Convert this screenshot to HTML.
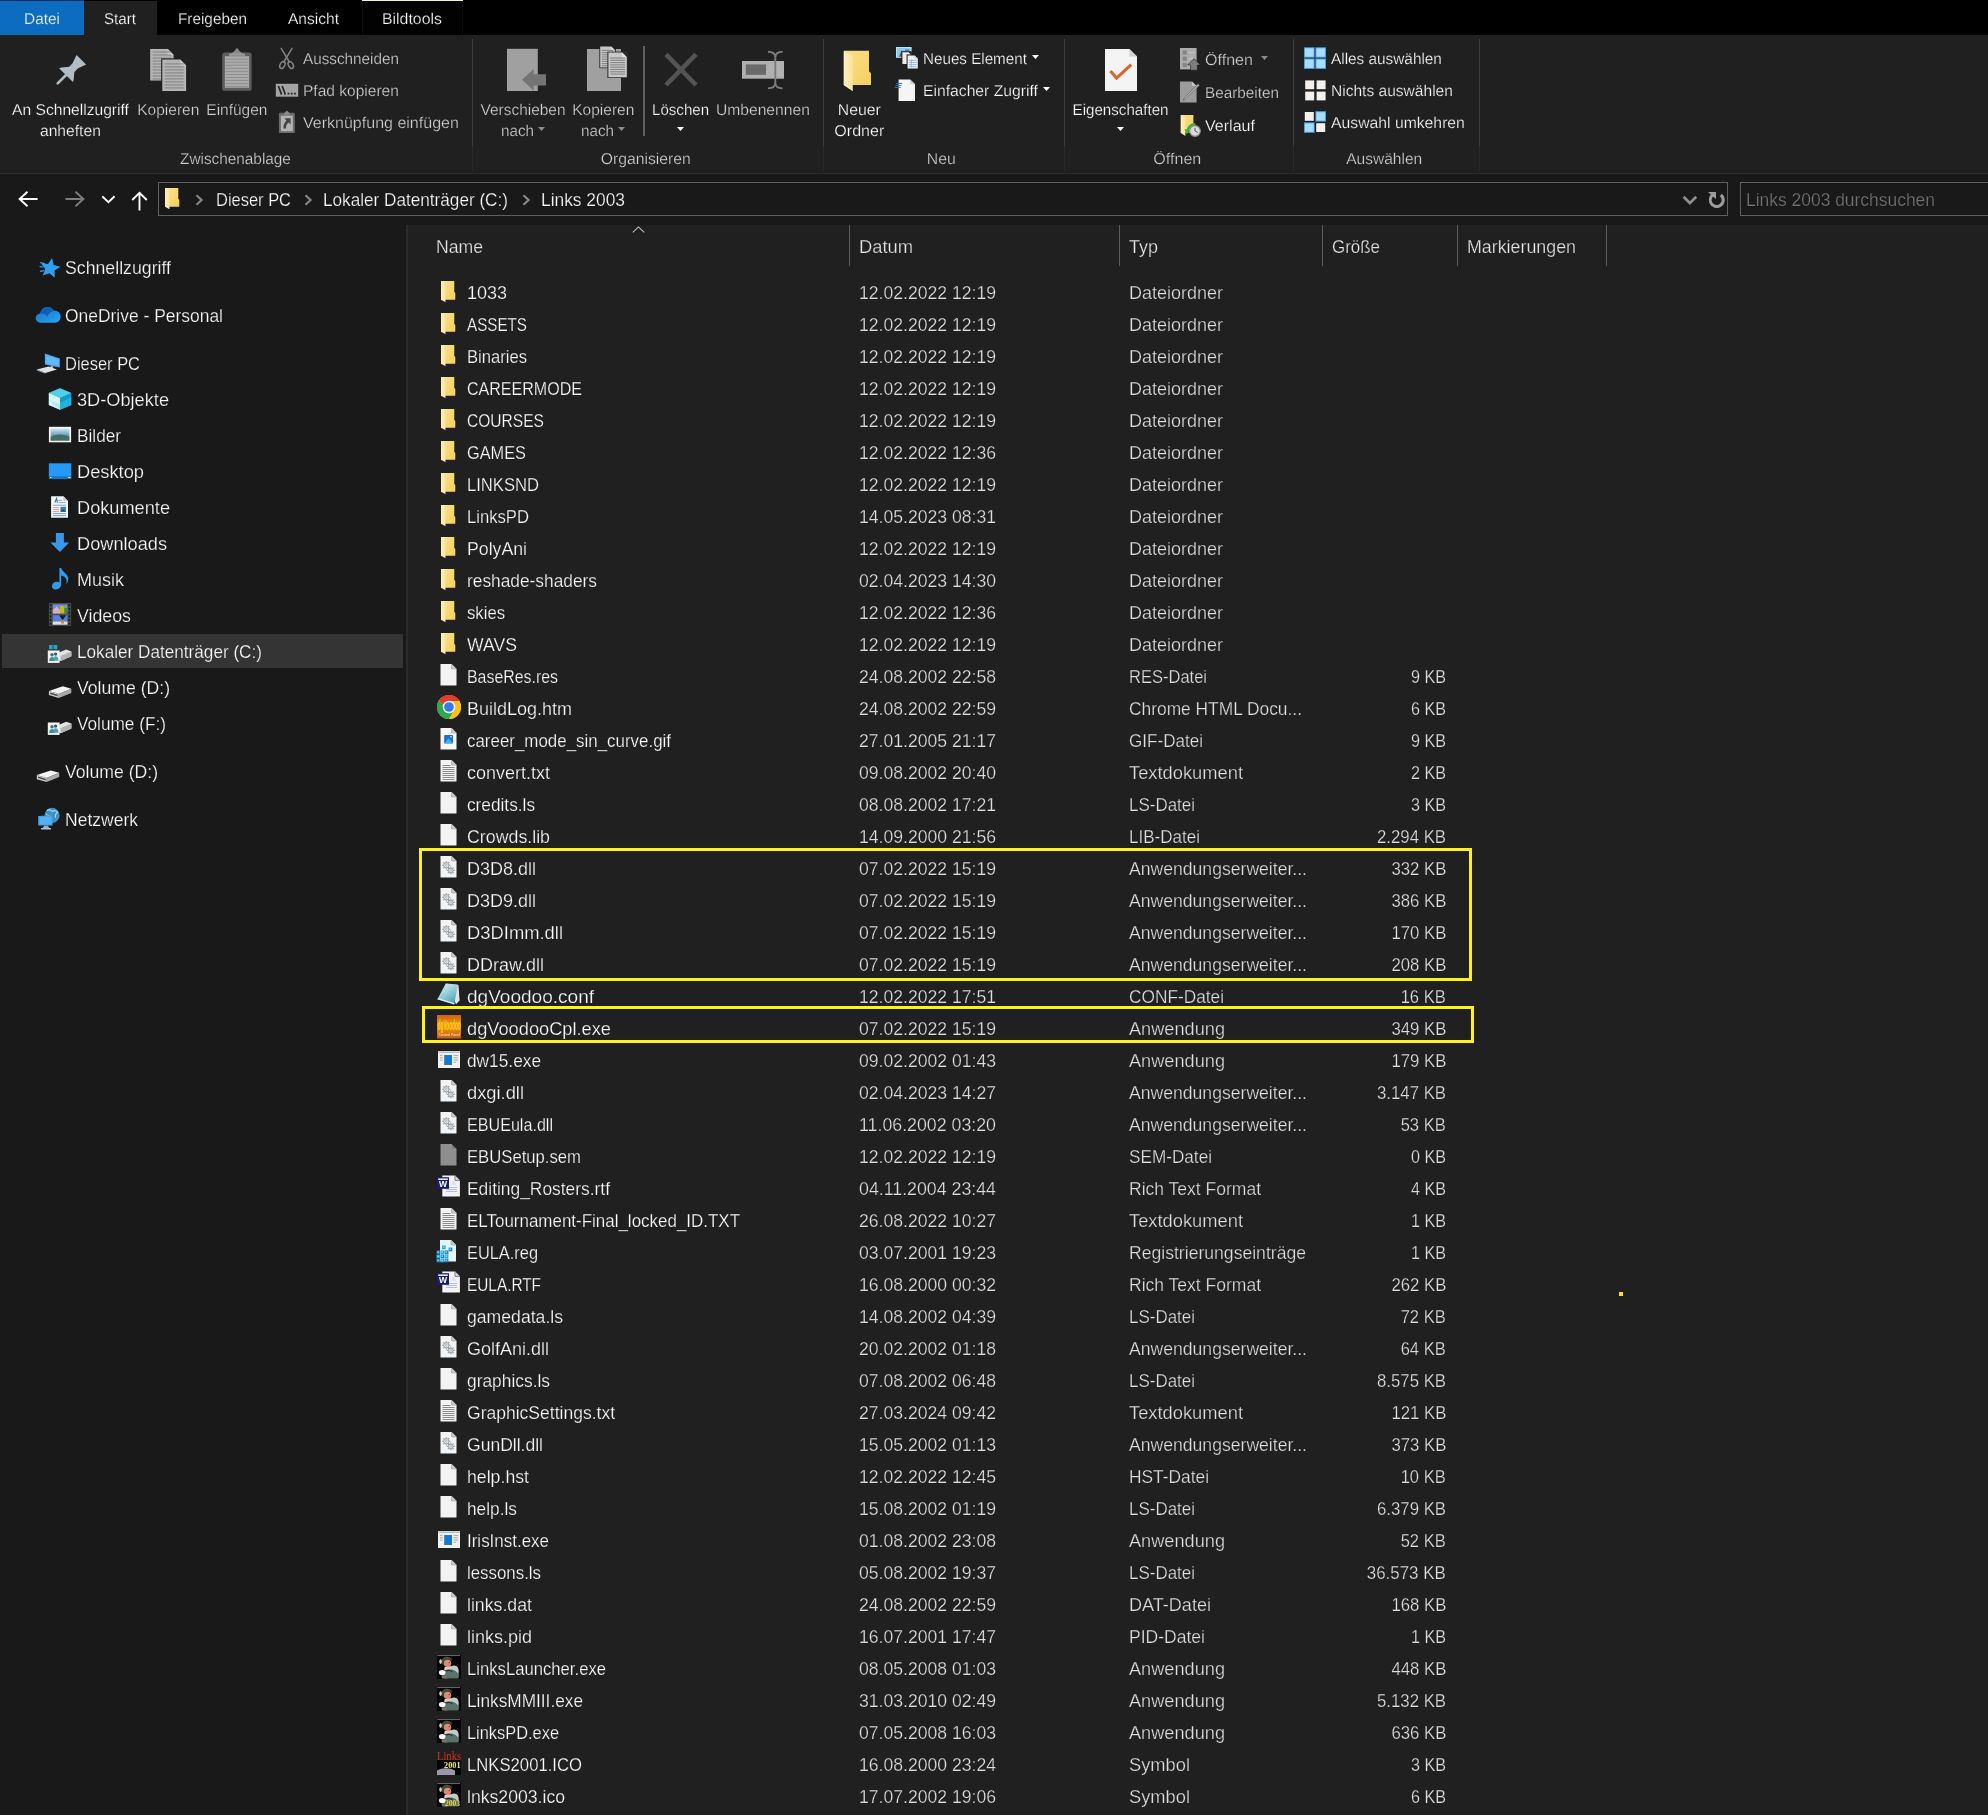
<!DOCTYPE html>
<html lang="de"><head><meta charset="utf-8"><title>Links 2003</title>
<style>
html,body{margin:0;padding:0}
body{width:1988px;height:1815px;background:#202020;position:relative;overflow:hidden;font-family:"Liberation Sans",sans-serif;}
.t{position:absolute;white-space:pre;line-height:20px;display:block}
.b{position:absolute;display:block}
#w{position:absolute;left:0;top:0;width:1988px;height:1815px;will-change:transform}
</style></head><body><div id="w">
<svg width="0" height="0" style="position:absolute"><defs>
<linearGradient id="gf" x1="0" y1="0" x2="1" y2="1"><stop offset="0" stop-color="#fbe08a"/><stop offset="1" stop-color="#f5cf5e"/></linearGradient>
<linearGradient id="gfl" x1="0" y1="0" x2="1" y2="0"><stop offset="0" stop-color="#fdf0c4"/><stop offset="1" stop-color="#fae29a"/></linearGradient>
<linearGradient id="gconf" x1="0" y1="0" x2="0.6" y2="1"><stop offset="0" stop-color="#e4f4f5"/><stop offset="0.45" stop-color="#a4d6de"/><stop offset="1" stop-color="#4fa5b8"/></linearGradient>
<linearGradient id="gdg" x1="0" y1="0" x2="0" y2="1"><stop offset="0" stop-color="#c9650c"/><stop offset="0.45" stop-color="#f09a18"/><stop offset="1" stop-color="#c85a0a"/></linearGradient>
<linearGradient id="gdrv" x1="0" y1="0" x2="0" y2="1"><stop offset="0" stop-color="#f4f4f4"/><stop offset="1" stop-color="#bdbdbd"/></linearGradient>
<linearGradient id="gcube" x1="0" y1="0" x2="1" y2="0"><stop offset="0" stop-color="#d6f3f6"/><stop offset="1" stop-color="#7fd6e4"/></linearGradient>
<linearGradient id="gpic" x1="0" y1="0" x2="0" y2="1"><stop offset="0" stop-color="#cfe6f2"/><stop offset="0.55" stop-color="#6f9fb5"/><stop offset="1" stop-color="#3f6f63"/></linearGradient>
<linearGradient id="gcloud" x1="0" y1="0" x2="1" y2="1"><stop offset="0" stop-color="#1372c9"/><stop offset="1" stop-color="#2aa4f4"/></linearGradient>
</defs></svg>
<div class="b" style="left:0px;top:0px;width:1988px;height:35px;background:#000;"></div>
<div class="b" style="left:0px;top:0px;width:84px;height:1px;background:#0a2c55;"></div>
<div class="b" style="left:0px;top:1px;width:84px;height:34px;background:#0c6cbf;"></div>
<div class="b" style="left:84px;top:1px;width:72.5px;height:35px;background:#202020;"></div>
<div class="b" style="left:362px;top:0px;width:101px;height:1.2px;background:#f2f2c2;"></div>
<div class="b" style="left:362px;top:1.2px;width:101px;height:33.8px;background:#020202;border-left:1px solid #0d0d0d;border-right:1px solid #0d0d0d;box-sizing:border-box"></div>
<div class="b" style="left:0px;top:169px;width:1988px;height:4px;background:#1d1d1d;"></div>
<div class="b" style="left:0px;top:173px;width:1988px;height:1px;background:#2c2c2c;"></div>
<div class="b" style="left:0px;top:174px;width:1988px;height:51px;background:#191919;"></div>
<div class="b" style="left:0px;top:225px;width:406px;height:1590px;background:#191919;"></div>
<div class="b" style="left:405.6px;top:225px;width:2.2px;height:1590px;background:#2a2a2a;"></div>
<span class="t" style="left:23.8px;top:10px;font-size:15.64px;color:#fff;transform:scaleX(0.9860);transform-origin:0 0;-webkit-text-stroke:0.25px #0c6cbf;text-rendering:geometricPrecision;">Datei</span>
<span class="t" style="left:103.5px;top:10px;font-size:15.64px;color:#fff;transform:scaleX(0.9689);transform-origin:0 0;-webkit-text-stroke:0.25px #202020;text-rendering:geometricPrecision;">Start</span>
<span class="t" style="left:177.5px;top:10px;font-size:15.64px;color:#fff;transform:scaleX(0.9798);transform-origin:0 0;-webkit-text-stroke:0.25px #000;text-rendering:geometricPrecision;">Freigeben</span>
<span class="t" style="left:287.5px;top:10px;font-size:15.64px;color:#fff;transform:scaleX(0.9944);transform-origin:0 0;-webkit-text-stroke:0.25px #000;text-rendering:geometricPrecision;">Ansicht</span>
<span class="t" style="left:381.5px;top:10px;font-size:15.64px;color:#fff;transform:scaleX(1.0150);transform-origin:0 0;-webkit-text-stroke:0.25px #020202;text-rendering:geometricPrecision;">Bildtools</span>
<div class="b" style="left:472px;top:39px;width:1px;height:107px;background:#3d3d3d;"></div>
<div class="b" style="left:472px;top:146px;width:1px;height:25px;background:#2a2a2a;"></div>
<div class="b" style="left:823px;top:39px;width:1px;height:107px;background:#3d3d3d;"></div>
<div class="b" style="left:823px;top:146px;width:1px;height:25px;background:#2a2a2a;"></div>
<div class="b" style="left:1064px;top:39px;width:1px;height:107px;background:#3d3d3d;"></div>
<div class="b" style="left:1064px;top:146px;width:1px;height:25px;background:#2a2a2a;"></div>
<div class="b" style="left:1293px;top:39px;width:1px;height:107px;background:#3d3d3d;"></div>
<div class="b" style="left:1293px;top:146px;width:1px;height:25px;background:#2a2a2a;"></div>
<div class="b" style="left:1479px;top:39px;width:1px;height:107px;background:#3d3d3d;"></div>
<div class="b" style="left:1479px;top:146px;width:1px;height:25px;background:#2a2a2a;"></div>
<div class="b" style="left:643.2px;top:46px;width:2px;height:90px;background:#606060;"></div>
<span class="t" style="left:12.46px;top:101px;font-size:15.64px;color:#fff;transform:scaleX(0.9993);transform-origin:50% 0;-webkit-text-stroke:0.25px #202020;text-rendering:geometricPrecision;">An Schnellzugriff</span>
<span class="t" style="left:40.06px;top:122px;font-size:15.64px;color:#fff;transform:scaleX(1.0020);transform-origin:50% 0;-webkit-text-stroke:0.25px #202020;text-rendering:geometricPrecision;">anheften</span>
<span class="t" style="left:136.70px;top:101px;font-size:15.64px;color:#d0d0d0;transform:scaleX(0.9903);transform-origin:50% 0;-webkit-text-stroke:0.25px #202020;text-rendering:geometricPrecision;">Kopieren</span>
<span class="t" style="left:205.63px;top:101px;font-size:15.64px;color:#d0d0d0;transform:scaleX(0.9880);transform-origin:50% 0;-webkit-text-stroke:0.25px #202020;text-rendering:geometricPrecision;">Einfügen</span>
<span class="t" style="left:302.5px;top:50px;font-size:15.64px;color:#d0d0d0;transform:scaleX(0.9771);transform-origin:0 0;-webkit-text-stroke:0.25px #202020;text-rendering:geometricPrecision;">Ausschneiden</span>
<span class="t" style="left:302.5px;top:82px;font-size:15.64px;color:#d0d0d0;transform:scaleX(0.9947);transform-origin:0 0;-webkit-text-stroke:0.25px #202020;text-rendering:geometricPrecision;">Pfad kopieren</span>
<span class="t" style="left:302.5px;top:114px;font-size:15.64px;color:#d0d0d0;transform:scaleX(1.0251);transform-origin:0 0;-webkit-text-stroke:0.25px #202020;text-rendering:geometricPrecision;">Verknüpfung einfügen</span>
<span class="t" style="left:178.99px;top:150px;font-size:15.64px;color:#d0d0d0;transform:scaleX(0.9821);transform-origin:50% 0;-webkit-text-stroke:0.25px #202020;text-rendering:geometricPrecision;">Zwischenablage</span>
<span class="t" style="left:479.96px;top:101px;font-size:15.64px;color:#d0d0d0;transform:scaleX(0.9874);transform-origin:50% 0;-webkit-text-stroke:0.25px #202020;text-rendering:geometricPrecision;">Verschieben</span>
<span class="t" style="left:500.8px;top:122px;font-size:15.64px;color:#d0d0d0;transform:scaleX(0.9730);transform-origin:0 0;-webkit-text-stroke:0.25px #202020;text-rendering:geometricPrecision;">nach</span>
<span class="t" style="left:571.50px;top:101px;font-size:15.64px;color:#d0d0d0;transform:scaleX(0.9903);transform-origin:50% 0;-webkit-text-stroke:0.25px #202020;text-rendering:geometricPrecision;">Kopieren</span>
<span class="t" style="left:580.8px;top:122px;font-size:15.64px;color:#d0d0d0;transform:scaleX(0.9730);transform-origin:0 0;-webkit-text-stroke:0.25px #202020;text-rendering:geometricPrecision;">nach</span>
<span class="t" style="left:650.93px;top:101px;font-size:15.64px;color:#fff;transform:scaleX(0.9640);transform-origin:50% 0;-webkit-text-stroke:0.25px #202020;text-rendering:geometricPrecision;">Löschen</span>
<span class="t" style="left:716.05px;top:101px;font-size:15.64px;color:#d0d0d0;transform:scaleX(1.0010);transform-origin:50% 0;-webkit-text-stroke:0.25px #202020;text-rendering:geometricPrecision;">Umbenennen</span>
<span class="t" style="left:601.23px;top:150px;font-size:15.64px;color:#d0d0d0;transform:scaleX(1.0051);transform-origin:50% 0;-webkit-text-stroke:0.25px #202020;text-rendering:geometricPrecision;">Organisieren</span>
<span class="t" style="left:838.20px;top:101px;font-size:15.64px;color:#fff;transform:scaleX(1.0094);transform-origin:50% 0;-webkit-text-stroke:0.25px #202020;text-rendering:geometricPrecision;">Neuer</span>
<span class="t" style="left:834.86px;top:122px;font-size:15.64px;color:#fff;transform:scaleX(1.0272);transform-origin:50% 0;-webkit-text-stroke:0.25px #202020;text-rendering:geometricPrecision;">Ordner</span>
<span class="t" style="left:922.8px;top:50px;font-size:15.64px;color:#fff;transform:scaleX(0.9726);transform-origin:0 0;-webkit-text-stroke:0.25px #202020;text-rendering:geometricPrecision;">Neues Element</span>
<span class="t" style="left:922.8px;top:82px;font-size:15.64px;color:#fff;transform:scaleX(1.0047);transform-origin:0 0;-webkit-text-stroke:0.25px #202020;text-rendering:geometricPrecision;">Einfacher Zugriff</span>
<span class="t" style="left:927.15px;top:150px;font-size:15.64px;color:#d0d0d0;transform:scaleX(1.0108);transform-origin:50% 0;-webkit-text-stroke:0.25px #202020;text-rendering:geometricPrecision;">Neu</span>
<span class="t" style="left:1071.44px;top:101px;font-size:15.64px;color:#fff;transform:scaleX(0.9685);transform-origin:50% 0;-webkit-text-stroke:0.25px #202020;text-rendering:geometricPrecision;">Eigenschaften</span>
<span class="t" style="left:1204.8px;top:51px;font-size:15.64px;color:#d0d0d0;transform:scaleX(1.0285);transform-origin:0 0;-webkit-text-stroke:0.25px #202020;text-rendering:geometricPrecision;">Öffnen</span>
<span class="t" style="left:1204.8px;top:84px;font-size:15.64px;color:#d0d0d0;transform:scaleX(0.9782);transform-origin:0 0;-webkit-text-stroke:0.25px #202020;text-rendering:geometricPrecision;">Bearbeiten</span>
<span class="t" style="left:1204.8px;top:117px;font-size:15.64px;color:#fff;transform:scaleX(1.0269);transform-origin:0 0;-webkit-text-stroke:0.25px #202020;text-rendering:geometricPrecision;">Verlauf</span>
<span class="t" style="left:1153.67px;top:150px;font-size:15.64px;color:#d0d0d0;transform:scaleX(1.0285);transform-origin:50% 0;-webkit-text-stroke:0.25px #202020;text-rendering:geometricPrecision;">Öffnen</span>
<span class="t" style="left:1330.6px;top:50px;font-size:15.64px;color:#fff;transform:scaleX(0.9821);transform-origin:0 0;-webkit-text-stroke:0.25px #202020;text-rendering:geometricPrecision;">Alles auswählen</span>
<span class="t" style="left:1330.6px;top:82px;font-size:15.64px;color:#fff;transform:scaleX(0.9953);transform-origin:0 0;-webkit-text-stroke:0.25px #202020;text-rendering:geometricPrecision;">Nichts auswählen</span>
<span class="t" style="left:1330.6px;top:114px;font-size:15.64px;color:#fff;transform:scaleX(1.0075);transform-origin:0 0;-webkit-text-stroke:0.25px #202020;text-rendering:geometricPrecision;">Auswahl umkehren</span>
<span class="t" style="left:1345.74px;top:150px;font-size:15.64px;color:#d0d0d0;transform:scaleX(0.9933);transform-origin:50% 0;-webkit-text-stroke:0.25px #202020;text-rendering:geometricPrecision;">Auswählen</span>
<svg class="b" style="left:538.0px;top:127px;" width="7" height="4" viewBox="0 0 7 4"><path d="M0 0H7L3.5 4z" fill="#8a8a8a"/></svg>
<svg class="b" style="left:618.0px;top:127px;" width="7" height="4" viewBox="0 0 7 4"><path d="M0 0H7L3.5 4z" fill="#8a8a8a"/></svg>
<svg class="b" style="left:677.1px;top:127px;" width="7" height="4" viewBox="0 0 7 4"><path d="M0 0H7L3.5 4z" fill="#fff"/></svg>
<svg class="b" style="left:1116.9px;top:127px;" width="7" height="4" viewBox="0 0 7 4"><path d="M0 0H7L3.5 4z" fill="#fff"/></svg>
<svg class="b" style="left:1032.2px;top:55px;" width="7" height="4" viewBox="0 0 7 4"><path d="M0 0H7L3.5 4z" fill="#fff"/></svg>
<svg class="b" style="left:1043.2px;top:87px;" width="7" height="4" viewBox="0 0 7 4"><path d="M0 0H7L3.5 4z" fill="#fff"/></svg>
<svg class="b" style="left:1260.7px;top:56px;" width="7" height="4" viewBox="0 0 7 4"><path d="M0 0H7L3.5 4z" fill="#8a8a8a"/></svg>
<svg class="b" style="left:0;top:0" width="1988" height="172" viewBox="0 0 1988 172"><g transform="translate(66,75.1) rotate(-45)" fill="#b2bcc4"><path d="M0 -9.8C3 -9 5.5 -5.2 8.2 -3.7L13 -3.7C15.5 -4.6 19 -6 21.7 -6.7L21.7 6.7C19 6 15.5 4.6 13 3.7L8.2 3.7C5.5 5.2 3 9 0 9.8z"/><rect x="-13" y="-1.3" width="14" height="2.6" rx="1.2"/></g><path d="M149.6 48.5H168.2L174.2 54.5V81.2H149.6z" fill="#2c2c2c"/><path d="M150.2 49H167.6L173.6 55V80.6H150.2z" fill="#b4b4b4"/><path d="M167.6 49V55H173.6z" fill="#d0d0d0"/><path d="M152.6 52.0H171.2" stroke="#868686" stroke-width="1.1"/><path d="M152.6 55.0H171.2" stroke="#868686" stroke-width="1.1"/><path d="M152.6 58.0H171.2" stroke="#868686" stroke-width="1.1"/><path d="M152.6 61.0H171.2" stroke="#868686" stroke-width="1.1"/><path d="M152.6 64.0H171.2" stroke="#868686" stroke-width="1.1"/><path d="M152.6 67.0H171.2" stroke="#868686" stroke-width="1.1"/><path d="M152.6 70.0H171.2" stroke="#868686" stroke-width="1.1"/><path d="M152.6 73.0H171.2" stroke="#868686" stroke-width="1.1"/><path d="M152.6 76.0H171.2" stroke="#868686" stroke-width="1.1"/><path d="M152.6 79.0H171.2" stroke="#868686" stroke-width="1.1"/><rect x="161.2" y="58.4" width="26" height="33.4" fill="#222"/><path d="M162.3 59.4H180.10000000000002L186.10000000000002 65.4V90.9H162.3z" fill="#b4b4b4"/><path d="M180.10000000000002 59.4V65.4H186.10000000000002z" fill="#d0d0d0"/><path d="M164.70000000000002 63.9H183.70000000000002" stroke="#868686" stroke-width="1.1"/><path d="M164.70000000000002 66.9H183.70000000000002" stroke="#868686" stroke-width="1.1"/><path d="M164.70000000000002 69.9H183.70000000000002" stroke="#868686" stroke-width="1.1"/><path d="M164.70000000000002 72.9H183.70000000000002" stroke="#868686" stroke-width="1.1"/><path d="M164.70000000000002 75.9H183.70000000000002" stroke="#868686" stroke-width="1.1"/><path d="M164.70000000000002 78.9H183.70000000000002" stroke="#868686" stroke-width="1.1"/><path d="M164.70000000000002 81.9H183.70000000000002" stroke="#868686" stroke-width="1.1"/><path d="M164.70000000000002 84.9H183.70000000000002" stroke="#868686" stroke-width="1.1"/><path d="M164.70000000000002 87.9H183.70000000000002" stroke="#868686" stroke-width="1.1"/><rect x="222.2" y="52.4" width="29.4" height="38.4" rx="2.6" fill="#5e5e5e"/><path d="M231 53.4C233 52.6 235.4 51 236 48.6H238C238.6 51 241 52.6 243 53.4V55H231z" fill="#8a8a8a"/><rect x="229" y="53.6" width="16" height="2.2" fill="#9a9a9a"/><rect x="224.9" y="56.2" width="24.2" height="31.6" fill="#ababab"/><path d="M225.6 59.2H248.4" stroke="#8e8e8e" stroke-width="1"/><path d="M225.6 62.2H248.4" stroke="#8e8e8e" stroke-width="1"/><path d="M225.6 65.3H248.4" stroke="#8e8e8e" stroke-width="1"/><path d="M225.6 68.3H248.4" stroke="#8e8e8e" stroke-width="1"/><path d="M225.6 71.4H248.4" stroke="#8e8e8e" stroke-width="1"/><path d="M225.6 74.5H248.4" stroke="#8e8e8e" stroke-width="1"/><path d="M225.6 77.5H248.4" stroke="#8e8e8e" stroke-width="1"/><path d="M225.6 80.5H248.4" stroke="#8e8e8e" stroke-width="1"/><path d="M225.6 83.6H248.4" stroke="#8e8e8e" stroke-width="1"/><path d="M225.6 86.7H248.4" stroke="#8e8e8e" stroke-width="1"/><g fill="none" stroke="#838383" stroke-width="1.5" stroke-linecap="round"><path d="M281.2 48.3L289.4 62"/><path d="M292 48.3L283.8 62"/><ellipse cx="282.4" cy="65" rx="2.3" ry="3.7" transform="rotate(28 282.4 65)"/><ellipse cx="290.8" cy="65" rx="2.3" ry="3.7" transform="rotate(-28 290.8 65)"/></g><rect x="275.8" y="83.8" width="22.4" height="12.9" fill="#a4a4a4"/><path d="M278.4 86L281.6 94.6M282.2 86L285.4 94.6" stroke="#262626" stroke-width="1.7"/><path d="M287.6 93.6H289.4M290.8 93.6H292.6M294 93.6H295.8" stroke="#262626" stroke-width="1.7"/><rect x="278.9" y="112.7" width="15.9" height="20.4" rx="1.2" fill="#6a6a6a"/><path d="M284 113.4L286.9 110.6L289.8 113.4V114.8H284z" fill="#8a8a8a"/><rect x="280.9" y="115.6" width="11.9" height="15.6" fill="#b2b2b2"/><path d="M284.4 118.2H290.6V124.4L288.6 122.4C286.6 124 285.6 126 286.2 128.4L283.6 128.6C283 125.4 284.2 122.6 286.4 120.4z" fill="#454545"/><rect x="507" y="48.8" width="30.8" height="42.2" fill="#a0a0a0"/><path d="M546 74.2V85.4H533.6V90.6L522 79.8L533.6 69V74.2z" fill="#747474"/><path d="M537.8 69V74.2H546" fill="none" stroke="#a0a0a0" stroke-width="0"/><rect x="587" y="49" width="34" height="42" fill="#a0a0a0"/><rect x="599.4" y="45.6" width="16.6" height="22.6" fill="#202020"/><path d="M600.2 46.4H611.2L615.2 50.4V67.4H600.2z" fill="#c4c4c4"/><path d="M611.2 46.4V50.4H615.2z" fill="#e0e0e0"/><path d="M601.8000000000001 50.4H613.6" stroke="#8a8a8a" stroke-width="1.1"/><path d="M601.8000000000001 52.6H613.6" stroke="#8a8a8a" stroke-width="1.1"/><path d="M601.8000000000001 54.8H613.6" stroke="#8a8a8a" stroke-width="1.1"/><path d="M601.8000000000001 57.0H613.6" stroke="#8a8a8a" stroke-width="1.1"/><path d="M601.8000000000001 59.2H613.6" stroke="#8a8a8a" stroke-width="1.1"/><path d="M601.8000000000001 61.4H613.6" stroke="#8a8a8a" stroke-width="1.1"/><path d="M601.8000000000001 63.6H613.6" stroke="#8a8a8a" stroke-width="1.1"/><path d="M601.8000000000001 65.8H613.6" stroke="#8a8a8a" stroke-width="1.1"/><rect x="607.4" y="51.6" width="20.4" height="26.4" fill="#2a2a2a"/><path d="M608.4 52.6H622.1999999999999L626.8 57.2V77.2H608.4z" fill="#c8c8c8"/><path d="M622.1999999999999 52.6V57.2H626.8z" fill="#e4e4e4"/><path d="M610.1999999999999 58.0H625.0" stroke="#858585" stroke-width="1.1"/><path d="M610.1999999999999 60.3H625.0" stroke="#858585" stroke-width="1.1"/><path d="M610.1999999999999 62.6H625.0" stroke="#858585" stroke-width="1.1"/><path d="M610.1999999999999 64.9H625.0" stroke="#858585" stroke-width="1.1"/><path d="M610.1999999999999 67.2H625.0" stroke="#858585" stroke-width="1.1"/><path d="M610.1999999999999 69.5H625.0" stroke="#858585" stroke-width="1.1"/><path d="M610.1999999999999 71.8H625.0" stroke="#858585" stroke-width="1.1"/><path d="M610.1999999999999 74.1H625.0" stroke="#858585" stroke-width="1.1"/><path d="M666 54.4L696 85M696 54.4L666 85" stroke="#545454" stroke-width="4.6"/><rect x="742" y="61" width="42" height="17.7" fill="#b0b0b0"/><rect x="745.8" y="64.4" width="20.2" height="10.4" fill="#6a6a6a"/><path d="M768 51.8C772.6 51.8 775.3 53.4 775.3 57.4V82.6C775.3 86.6 772.6 88.4 768 88.4M782.6 51.8C778 51.8 775.3 53.4 775.3 57.4M775.3 82.6C775.3 86.6 778 88.4 782.6 88.4" fill="none" stroke="#7c7c7c" stroke-width="1.9"/><path d="M843.8 50.8H869V71.2L871 73.2V85H843.8z" fill="url(#gf)"/><path d="M843.8 51.3L852.8 55.6V91.3L843.8 85.3z" fill="url(#gfl)"/><rect x="896" y="47" width="15.6" height="10.8" fill="#bfe3f4"/><rect x="897" y="48" width="13.6" height="8.8" fill="#8cc8ea"/><path d="M899 56.8L901.6 50.6L903 52.4L904.8 56.8z" fill="#44606a"/><rect x="905" y="49.6" width="4.4" height="1.2" fill="#3a6fa8"/><rect x="901.4" y="51.2" width="10.4" height="13.6" fill="#202020"/><path d="M902.4 52.2H908.6L910.8 54.4V64H902.4z" fill="#f1e9ec"/><rect x="906.6" y="54.4" width="12.2" height="15" fill="#202020"/><path d="M907.6 55.4H914.6L917.8 58.6V68.6H907.6z" fill="#eef1f6"/><path d="M914.6 55.4V58.6H917.8z" fill="#c3c7ce"/><path d="M908.8 60.4H916.6" stroke="#86a8d6" stroke-width="0.8"/><path d="M908.8 62.5H916.6" stroke="#86a8d6" stroke-width="0.8"/><path d="M908.8 64.6H916.6" stroke="#86a8d6" stroke-width="0.8"/><path d="M908.8 66.7H916.6" stroke="#86a8d6" stroke-width="0.8"/><path d="M911.4 59.6V67.6" stroke="#86a8d6" stroke-width="0.7"/><path d="M898.6 79.4H910.2L915 84.2V101H898.6z" fill="#f5f5f5"/><path d="M910.2 79.4V84.2H915z" fill="#cfcfcf"/><path d="M896.2 83.4H902.2M895.4 85.4H901.4M894.8 87.4H900.6" stroke="#2f74c0" stroke-width="1"/><path d="M1105 49H1129.4L1137 56.6V91H1105z" fill="#f4f4f4"/><path d="M1129.4 49V56.6H1137z" fill="#d2d2d2"/><path d="M1110.4 71L1116.6 78L1131.2 64.6" fill="none" stroke="#e0602a" stroke-width="3"/><rect x="1180" y="48" width="16.6" height="21.4" fill="#adadad"/><rect x="1182.6" y="50.4" width="4.2" height="4.2" fill="#858585"/><path d="M1189 52.5H1194.6" stroke="#c6c6c6" stroke-width="1"/><rect x="1182.6" y="56.6" width="4.2" height="4.2" fill="#858585"/><path d="M1189 58.7H1194.6" stroke="#c6c6c6" stroke-width="1"/><rect x="1182.6" y="62.8" width="4.2" height="4.2" fill="#858585"/><path d="M1189 64.9H1194.6" stroke="#c6c6c6" stroke-width="1"/><path d="M1194 58.6L1200.4 65H1197.4V70.2H1190.6V65H1187.6z" fill="#7e7e7e" stroke="#202020" stroke-width="0.6"/><path d="M1180 81.4H1192L1196.6 86V102.6H1180z" fill="#9c9c9c"/><path d="M1192 81.4V86H1196.6z" fill="#c4c4c4"/><path d="M1198 83.8L1199.4 85.2L1185.4 99.2L1183.2 100.2L1184.2 98z" fill="#b4b4b4" stroke="#6a6a6a" stroke-width="0.8"/><path d="M1180.8 115H1193.4V126L1194.6 126.8V132.6H1180.8z" fill="url(#gf)"/><path d="M1180.8 115.3L1185.4 117.4V136L1180.8 133z" fill="url(#gfl)"/><path d="M1195.4 124.2C1191.4 124.4 1188.4 127 1187.6 130.6" fill="none" stroke="#3fae3a" stroke-width="2.6"/><path d="M1184.6 129L1190.4 130.4L1186.6 134.4z" fill="#3fae3a"/><circle cx="1195" cy="131" r="5.3" fill="#dcdcdc" stroke="#8c8c8c" stroke-width="1.2"/><path d="M1195 127.8V131L1197.6 132.4" fill="none" stroke="#555" stroke-width="1"/><rect x="1304.0" y="47.3" width="10.6" height="10.4" fill="#4aa3ea"/><rect x="1305.0" y="48.3" width="8.6" height="8.4" fill="#abdcff"/><rect x="1315.4" y="47.3" width="10.6" height="10.4" fill="#4aa3ea"/><rect x="1316.4" y="48.3" width="8.6" height="8.4" fill="#abdcff"/><rect x="1304.0" y="58.5" width="10.6" height="10.4" fill="#4aa3ea"/><rect x="1305.0" y="59.5" width="8.6" height="8.4" fill="#abdcff"/><rect x="1315.4" y="58.5" width="10.6" height="10.4" fill="#4aa3ea"/><rect x="1316.4" y="59.5" width="8.6" height="8.4" fill="#abdcff"/><rect x="1305.2" y="80.39999999999999" width="9" height="8.8" fill="#f4f0ee"/><rect x="1316.6000000000001" y="80.39999999999999" width="9" height="8.8" fill="#f4f0ee"/><rect x="1305.2" y="91.6" width="9" height="8.8" fill="#f4f0ee"/><rect x="1316.6000000000001" y="91.6" width="9" height="8.8" fill="#f4f0ee"/><rect x="1304.8" y="112.0" width="9" height="8.8" fill="#f4f0ee"/><rect x="1315.4" y="111.2" width="10.6" height="10.4" fill="#4aa3ea"/><rect x="1316.4" y="112.2" width="8.6" height="8.4" fill="#abdcff"/><rect x="1304.0" y="122.4" width="10.6" height="10.4" fill="#4aa3ea"/><rect x="1305.0" y="123.4" width="8.6" height="8.4" fill="#abdcff"/><rect x="1316.2" y="123.2" width="9" height="8.8" fill="#f4f0ee"/></svg>
<div class="b" style="left:158px;top:182px;width:1570px;height:34px;background:#191919;border:1px solid #5f5f5f;box-sizing:border-box"></div>
<div class="b" style="left:1740px;top:182px;width:260px;height:34px;background:#191919;border:1px solid #5f5f5f;box-sizing:border-box"></div>
<svg class="b" style="left:18.2px;top:191px;" width="20" height="16" viewBox="0 0 20 16"><path d="M9.5 0.8L1.6 8L9.5 15.2M1.8 8H19.6" fill="none" stroke="#fff" stroke-width="1.9"/></svg>
<svg class="b" style="left:64.5px;top:191px;" width="20" height="16" viewBox="0 0 20 16"><path d="M9.5 0.8L1.6 8L9.5 15.2M1.8 8H19.6" fill="none" stroke="#7c7c7c" stroke-width="1.9" transform="translate(20,0) scale(-1,1)"/></svg>
<svg class="b" style="left:101px;top:194.5px;" width="15" height="9" viewBox="0 0 15 9"><path d="M1.2 1.2L7.4 7.2L13.6 1.2" fill="none" stroke="#fff" stroke-width="1.9"/></svg>
<svg class="b" style="left:130.5px;top:190.5px;" width="17" height="20" viewBox="0 0 17 20"><path d="M1.2 9L8.5 1.8L15.8 9M8.5 2V19.6" fill="none" stroke="#fff" stroke-width="1.9"/></svg>
<svg class="b" style="left:164.7px;top:188px;" width="15" height="21.5" viewBox="0 0 15 21.5"><path d="M4 0H13.3V11.1L14.3 11.7V18.7H4z" fill="url(#gf)"/><path d="M0 0H4.5V21.3L0 18.8z" fill="url(#gfl)"/></svg>
<svg class="b" style="left:195.3px;top:193.5px;" width="9" height="12" viewBox="0 0 9 12"><path d="M1.5 1.2L6.6 6L1.5 10.8" fill="none" stroke="#858585" stroke-width="2.2"/></svg>
<svg class="b" style="left:304px;top:193.5px;" width="9" height="12" viewBox="0 0 9 12"><path d="M1.5 1.2L6.6 6L1.5 10.8" fill="none" stroke="#858585" stroke-width="2.2"/></svg>
<svg class="b" style="left:521.5px;top:193.5px;" width="9" height="12" viewBox="0 0 9 12"><path d="M1.5 1.2L6.6 6L1.5 10.8" fill="none" stroke="#858585" stroke-width="2.2"/></svg>
<span class="t" style="left:216.0px;top:190px;font-size:17.5px;color:#fff;transform:scaleX(0.9405);transform-origin:0 0;-webkit-text-stroke:0.25px #191919;">Dieser PC</span>
<span class="t" style="left:323.2px;top:190px;font-size:17.5px;color:#fff;transform:scaleX(0.9804);transform-origin:0 0;-webkit-text-stroke:0.25px #191919;">Lokaler Datenträger (C:)</span>
<span class="t" style="left:541.0px;top:190px;font-size:17.5px;color:#fff;transform:scaleX(0.9924);transform-origin:0 0;-webkit-text-stroke:0.25px #191919;">Links 2003</span>
<svg class="b" style="left:1682px;top:195px;" width="16" height="11" viewBox="0 0 16 11"><path d="M1.6 1.8L7.9 8.2L14.2 1.8" fill="none" stroke="#8f8f8f" stroke-width="2.7"/></svg>
<svg class="b" style="left:1706px;top:190px;" width="20" height="20" viewBox="0 0 20 20"><path d="M9.8 3.6A6.5 6.5 0 1 0 14.8 5" fill="none" stroke="#9c9c9c" stroke-width="3"/><path d="M2 2H10V9z" fill="#9c9c9c"/></svg>
<span class="t" style="left:1745.5px;top:190px;font-size:17.5px;color:#747474;transform:scaleX(0.9962);transform-origin:0 0;-webkit-text-stroke:0.25px #191919;">Links 2003 durchsuchen</span>
<div class="b" style="left:2px;top:634px;width:401px;height:33.5px;background:#343434;"></div>
<svg class="b" style="left:0;top:225px" width="100" height="620" viewBox="0 225 100 620"><polygon points="52.01,258.06 53.72,264.90 60.50,266.85 54.53,270.60 54.76,277.65 49.35,273.13 42.72,275.52 45.35,268.98 41.02,263.42 48.05,263.90" fill="#2f9ff2"/><path d="M40.2 262.6L45 263.6M39.6 266.6L43.6 267M40 271.4L44.2 270.6" stroke="#2f9ff2" stroke-width="1.2"/><path d="M41.2 322.8C37.6 322.8 35.6 320.6 35.8 317.8C36 315.4 37.8 313.8 40.2 313.6C40.8 309.8 43.8 307 47.6 307C50.6 307 52.8 308.4 54 310.8C57.6 310.4 60.6 312.8 60.6 316.6C60.6 320.2 58.2 322.8 54.8 322.8z" fill="url(#gcloud)"/><path d="M40.2 313.6C40.8 309.8 43.8 307 47.6 307C50.6 307 52.8 308.4 54 310.8C51 311.4 48.6 313.4 47.4 316.4C45.4 314.4 42.6 313.4 40.2 313.6z" fill="#0f5fb4"/><path d="M44.9 353.4L59.8 358.4V367.4L44.9 364.6z" fill="#4aa9f2"/><path d="M46.2 355.2L58.6 359.4V365.8L46.2 363.4z" fill="#63b8f8"/><path d="M51 366L53.6 366.6L52.4 368.4L49.6 367.8z" fill="#b8c4cc"/><path d="M36.8 369.6L48.6 366.6L57 369.4L45.4 373z" fill="#dfe3e6"/><path d="M36.8 369.6L45.4 373V373.8L36.8 370.4z" fill="#9aa4aa"/><path d="M60 388.2L71.2 393V405L60 409.8L48.8 405V393z" fill="#17a9d4"/><path d="M60 388.2L71.2 393L60 398L48.8 393z" fill="#52cfe8"/><path d="M48.8 393L60 398V409.8L48.8 405z" fill="#d9f3f6"/><path d="M48.8 400L60 409.8V404z" fill="#a5e4ee" opacity=".7"/><path d="M60 398L71.2 393V405L60 409.8z" fill="#0f9ccc"/><path d="M60 403L71.2 397V405L60 409.8z" fill="#2bb8dc" opacity=".8"/><rect x="48.9" y="426.8" width="22.2" height="15.5" fill="#f2f4f5"/><rect x="50.7" y="428.6" width="18.6" height="11.9" fill="url(#gpic)"/><path d="M50.7 437C55 434 60 433.4 69.3 436.4V440.5H50.7z" fill="#456f66"/><rect x="48.9" y="463.3" width="22.4" height="15.4" fill="#2499f5"/><rect x="48.9" y="476.3" width="22.4" height="2.4" fill="#0f78d0"/><rect x="50" y="476.9" width="1.4" height="1.2" fill="#fff"/><rect x="68.2" y="476.9" width="2.2" height="1.2" fill="#fff"/><path d="M51.1 496.3H63.4L68 500.9V517.8H51.1z" fill="#f4f6f8"/><path d="M63.4 496.3V500.9H68z" fill="#c5ccd2"/><path d="M54.8 502.6L56.6 498.6L57.4 502.6" fill="none" stroke="#2f6fc0" stroke-width="1.1"/><path d="M58.6 500.4H62M58.6 502.6H65.6" stroke="#7aa6d8" stroke-width="0.9"/><path d="M53 505.2H66M53 513.6H66M53 515.6H66" stroke="#6f9ad0" stroke-width="0.9"/><path d="M53 507.6H59M53 509.6H59M53 511.6H59" stroke="#d08a80" stroke-width="0.8"/><rect x="60.4" y="506.8" width="5.6" height="5" fill="#3f7fb0"/><path d="M60.4 511.8L63 509L66 511.8z" fill="#2a4f6a"/><path d="M55.9 533H63.9V542.6H69.2L59.9 552L50.4 542.6H55.9z" fill="#3a97ea"/><ellipse cx="56.4" cy="585.6" rx="4.6" ry="3.7" transform="rotate(-20 56.4 585.6)" fill="#2f9bea"/><path d="M59.4 568H61.2C62 571 65 572.6 67.2 575.4C69 577.8 68.6 581.6 66.2 584.2C67.2 581.2 66.6 578.4 64.4 576.8C63.2 576 62 575.6 61.2 575.4V585.8H59.4z" fill="#2f9bea"/><rect x="48.9" y="603" width="22.2" height="22.8" fill="#4b4f4b"/><rect x="49.8" y="604.2" width="1.8" height="2" fill="#1c1c1c"/><rect x="68.4" y="604.2" width="1.8" height="2" fill="#1c1c1c"/><rect x="49.8" y="607.9" width="1.8" height="2" fill="#1c1c1c"/><rect x="68.4" y="607.9" width="1.8" height="2" fill="#1c1c1c"/><rect x="49.8" y="611.6" width="1.8" height="2" fill="#1c1c1c"/><rect x="68.4" y="611.6" width="1.8" height="2" fill="#1c1c1c"/><rect x="49.8" y="615.3" width="1.8" height="2" fill="#1c1c1c"/><rect x="68.4" y="615.3" width="1.8" height="2" fill="#1c1c1c"/><rect x="49.8" y="619.0" width="1.8" height="2" fill="#1c1c1c"/><rect x="68.4" y="619.0" width="1.8" height="2" fill="#1c1c1c"/><rect x="49.8" y="622.7" width="1.8" height="2" fill="#1c1c1c"/><rect x="68.4" y="622.7" width="1.8" height="2" fill="#1c1c1c"/><rect x="52.8" y="604.4" width="14.6" height="9" fill="#6f8fd8"/><path d="M52.8 610L57 606.4L60 610.6V613.4H52.8z" fill="#d8b0c0"/><rect x="60" y="606" width="4.4" height="7.4" fill="#c8b818"/><rect x="64.4" y="608" width="3" height="5.4" fill="#3a8a30"/><rect x="52.8" y="615.2" width="14.6" height="9.4" fill="#5a7fe0"/><path d="M59 615.2L62.6 620L66.2 615.2z" fill="#1c1c1c"/><path d="M52.8 621.6H67.4V624.6H52.8z" fill="#e8e0d8"/><rect x="61" y="620.6" width="3" height="3" fill="#d89018"/><g transform="translate(57.2,649.6)"><path d="M0 3.6L9 0L14.2 1.8V6.6L3.4 11.4L0 10z" fill="#e4e4e4"/><path d="M3.4 6.2L14.2 1.8V6.6L3.4 11.4z" fill="#b4b4b4"/></g><g transform="translate(47.8,650.5)"><rect width="11.8" height="12.4" fill="#f1f3f2"/><circle cx="4.2" cy="4.2" r="1.7" fill="#3f6f7a"/><path d="M1.4 10.6C1.4 7.6 2.6 6.4 4.2 6.4S7 7.6 7 10.6z" fill="#3f8f9a"/><circle cx="7.8" cy="3.6" r="1.7" fill="#2f5f6a"/><path d="M5.6 10.2C5.6 7 6.4 5.8 7.9 5.8S10.6 7 10.6 10.2z" fill="#4fa0aa"/></g><rect x="49" y="645" width="3.7" height="4.2" fill="#1fa6c6"/><rect x="53.5" y="645" width="3.8" height="4.2" fill="#1fa6c6"/><g transform="translate(48.9,686.3)"><path d="M0 4.6L14 0L22.4 2.4L9.9 7.6z" fill="#f3f3f3"/><path d="M0 4.6L9.9 7.6V11.6L0 8.8z" fill="#cfcfcf"/><path d="M9.9 7.6L22.4 2.4V6.6L9.9 11.6z" fill="#a9a9a9"/><path d="M1.2 6.1L8.8 8.4V10L1.2 7.7z" fill="#4a4a4a"/></g><g transform="translate(57.2,721.8)"><path d="M0 3.6L9 0L14.2 1.8V6.6L3.4 11.4L0 10z" fill="#e4e4e4"/><path d="M3.4 6.2L14.2 1.8V6.6L3.4 11.4z" fill="#b4b4b4"/></g><g transform="translate(47.8,722.5)"><rect width="11.8" height="12.4" fill="#f1f3f2"/><circle cx="4.2" cy="4.2" r="1.7" fill="#3f6f7a"/><path d="M1.4 10.6C1.4 7.6 2.6 6.4 4.2 6.4S7 7.6 7 10.6z" fill="#3f8f9a"/><circle cx="7.8" cy="3.6" r="1.7" fill="#2f5f6a"/><path d="M5.6 10.2C5.6 7 6.4 5.8 7.9 5.8S10.6 7 10.6 10.2z" fill="#4fa0aa"/></g><g transform="translate(36.8,770.4)"><path d="M0 4.6L14 0L22.4 2.4L9.9 7.6z" fill="#f3f3f3"/><path d="M0 4.6L9.9 7.6V11.6L0 8.8z" fill="#cfcfcf"/><path d="M9.9 7.6L22.4 2.4V6.6L9.9 11.6z" fill="#a9a9a9"/><path d="M1.2 6.1L8.8 8.4V10L1.2 7.7z" fill="#4a4a4a"/></g><circle cx="52" cy="815.4" r="7.6" fill="#3f8fc0"/><path d="M47 810.6C49 809.4 51 810 52.4 811.4C54 810 56.4 810.6 57.6 812.6C56 813.6 55 815.6 55.6 817.6" fill="none" stroke="#a8d8f0" stroke-width="1.2"/><path d="M46 814C48 816 50 815 51 817" fill="none" stroke="#a8d8f0" stroke-width="1"/><path d="M38.2 816L52.6 815.2V825.4L38.2 825.6z" fill="#3d9fea"/><path d="M39.4 817L51.4 816.4V824.4L39.4 824.6z" fill="#55b0f4"/><path d="M44.4 825.6H47.6L49.6 828.2H42.4z" fill="#8ab0c8"/><rect x="41" y="828.2" width="10" height="1.2" fill="#dfe3e6"/></svg>
<span class="t" style="left:65.0px;top:258px;font-size:17.5px;color:#fff;transform:scaleX(1.0121);transform-origin:0 0;-webkit-text-stroke:0.25px #191919;">Schnellzugriff</span>
<span class="t" style="left:65.0px;top:306px;font-size:17.5px;color:#fff;transform:scaleX(0.9966);transform-origin:0 0;-webkit-text-stroke:0.25px #191919;">OneDrive - Personal</span>
<span class="t" style="left:65.3px;top:354px;font-size:17.5px;color:#fff;transform:scaleX(0.9405);transform-origin:0 0;-webkit-text-stroke:0.25px #191919;">Dieser PC</span>
<span class="t" style="left:77.0px;top:390px;font-size:17.5px;color:#fff;transform:scaleX(1.0395);transform-origin:0 0;-webkit-text-stroke:0.25px #191919;">3D-Objekte</span>
<span class="t" style="left:77.0px;top:426px;font-size:17.5px;color:#fff;transform:scaleX(0.9834);transform-origin:0 0;-webkit-text-stroke:0.25px #191919;">Bilder</span>
<span class="t" style="left:77.0px;top:462px;font-size:17.5px;color:#fff;transform:scaleX(1.0436);transform-origin:0 0;-webkit-text-stroke:0.25px #191919;">Desktop</span>
<span class="t" style="left:77.0px;top:498px;font-size:17.5px;color:#fff;transform:scaleX(1.0392);transform-origin:0 0;-webkit-text-stroke:0.25px #191919;">Dokumente</span>
<span class="t" style="left:77.0px;top:534px;font-size:17.5px;color:#fff;transform:scaleX(1.0395);transform-origin:0 0;-webkit-text-stroke:0.25px #191919;">Downloads</span>
<span class="t" style="left:77.0px;top:570px;font-size:17.5px;color:#fff;transform:scaleX(1.0285);transform-origin:0 0;-webkit-text-stroke:0.25px #191919;">Musik</span>
<span class="t" style="left:77.0px;top:606px;font-size:17.5px;color:#fff;transform:scaleX(1.0152);transform-origin:0 0;-webkit-text-stroke:0.25px #191919;">Videos</span>
<span class="t" style="left:77.0px;top:642px;font-size:17.5px;color:#fff;transform:scaleX(0.9804);transform-origin:0 0;-webkit-text-stroke:0.25px #343434;">Lokaler Datenträger (C:)</span>
<span class="t" style="left:77.0px;top:678px;font-size:17.5px;color:#fff;transform:scaleX(1.0066);transform-origin:0 0;-webkit-text-stroke:0.25px #191919;">Volume (D:)</span>
<span class="t" style="left:77.0px;top:714px;font-size:17.5px;color:#fff;transform:scaleX(0.9841);transform-origin:0 0;-webkit-text-stroke:0.25px #191919;">Volume (F:)</span>
<span class="t" style="left:65.0px;top:762px;font-size:17.5px;color:#fff;transform:scaleX(1.0066);transform-origin:0 0;-webkit-text-stroke:0.25px #191919;">Volume (D:)</span>
<span class="t" style="left:65.0px;top:810px;font-size:17.5px;color:#fff;transform:scaleX(1.0009);transform-origin:0 0;-webkit-text-stroke:0.25px #191919;">Netzwerk</span>
<div class="b" style="left:849px;top:225px;width:1px;height:41px;background:#5c5c5c;"></div>
<div class="b" style="left:1119px;top:225px;width:1px;height:41px;background:#5c5c5c;"></div>
<div class="b" style="left:1322px;top:225px;width:1px;height:41px;background:#5c5c5c;"></div>
<div class="b" style="left:1457px;top:225px;width:1px;height:41px;background:#5c5c5c;"></div>
<div class="b" style="left:1606px;top:225px;width:1px;height:41px;background:#5c5c5c;"></div>
<svg class="b" style="left:632px;top:225.5px;" width="13" height="7" viewBox="0 0 13 7"><path d="M0.8 6.4L6.5 0.9L12.2 6.4" fill="none" stroke="#bdbdbd" stroke-width="1.1"/></svg>
<span class="t" style="left:435.8px;top:237px;font-size:17.5px;color:#e4e4e4;transform:scaleX(1.0068);transform-origin:0 0;-webkit-text-stroke:0.25px #202020;">Name</span>
<span class="t" style="left:858.6px;top:237px;font-size:17.5px;color:#e4e4e4;transform:scaleX(1.0477);transform-origin:0 0;-webkit-text-stroke:0.25px #202020;">Datum</span>
<span class="t" style="left:1128.6px;top:237px;font-size:17.5px;color:#e4e4e4;transform:scaleX(1.0281);transform-origin:0 0;-webkit-text-stroke:0.25px #202020;">Typ</span>
<span class="t" style="left:1331.6px;top:237px;font-size:17.5px;color:#e4e4e4;transform:scaleX(0.9678);transform-origin:0 0;-webkit-text-stroke:0.25px #202020;">Größe</span>
<span class="t" style="left:1466.8px;top:237px;font-size:17.5px;color:#e4e4e4;transform:scaleX(1.0187);transform-origin:0 0;-webkit-text-stroke:0.25px #202020;">Markierungen</span>
<svg class="b" style="left:440.6px;top:280.6px;" width="15" height="22" viewBox="0 0 15 22"><path d="M4 0H13.3V11.1L14.3 11.7V18.7H4z" fill="url(#gf)"/><path d="M0 0H4.5V21.3L0 18.8z" fill="url(#gfl)"/></svg>
<span class="t" style="left:467.2px;top:283px;font-size:17.5px;color:#fff;transform:scaleX(1.0275);transform-origin:0 0;-webkit-text-stroke:0.25px #202020;">1033</span>
<span class="t" style="left:859.2px;top:283px;font-size:17.5px;color:#dedede;transform:scaleX(1.0056);transform-origin:0 0;-webkit-text-stroke:0.25px #202020;">12.02.2022 12:19</span>
<span class="t" style="left:1128.8px;top:283px;font-size:17.5px;color:#dedede;transform:scaleX(1.0280);transform-origin:0 0;-webkit-text-stroke:0.25px #202020;">Dateiordner</span>
<svg class="b" style="left:440.6px;top:312.6px;" width="15" height="22" viewBox="0 0 15 22"><path d="M4 0H13.3V11.1L14.3 11.7V18.7H4z" fill="url(#gf)"/><path d="M0 0H4.5V21.3L0 18.8z" fill="url(#gfl)"/></svg>
<span class="t" style="left:467.2px;top:315px;font-size:17.5px;color:#fff;transform:scaleX(0.8689);transform-origin:0 0;-webkit-text-stroke:0.25px #202020;">ASSETS</span>
<span class="t" style="left:859.2px;top:315px;font-size:17.5px;color:#dedede;transform:scaleX(1.0056);transform-origin:0 0;-webkit-text-stroke:0.25px #202020;">12.02.2022 12:19</span>
<span class="t" style="left:1128.8px;top:315px;font-size:17.5px;color:#dedede;transform:scaleX(1.0280);transform-origin:0 0;-webkit-text-stroke:0.25px #202020;">Dateiordner</span>
<svg class="b" style="left:440.6px;top:344.6px;" width="15" height="22" viewBox="0 0 15 22"><path d="M4 0H13.3V11.1L14.3 11.7V18.7H4z" fill="url(#gf)"/><path d="M0 0H4.5V21.3L0 18.8z" fill="url(#gfl)"/></svg>
<span class="t" style="left:467.2px;top:347px;font-size:17.5px;color:#fff;transform:scaleX(0.9490);transform-origin:0 0;-webkit-text-stroke:0.25px #202020;">Binaries</span>
<span class="t" style="left:859.2px;top:347px;font-size:17.5px;color:#dedede;transform:scaleX(1.0056);transform-origin:0 0;-webkit-text-stroke:0.25px #202020;">12.02.2022 12:19</span>
<span class="t" style="left:1128.8px;top:347px;font-size:17.5px;color:#dedede;transform:scaleX(1.0280);transform-origin:0 0;-webkit-text-stroke:0.25px #202020;">Dateiordner</span>
<svg class="b" style="left:440.6px;top:376.6px;" width="15" height="22" viewBox="0 0 15 22"><path d="M4 0H13.3V11.1L14.3 11.7V18.7H4z" fill="url(#gf)"/><path d="M0 0H4.5V21.3L0 18.8z" fill="url(#gfl)"/></svg>
<span class="t" style="left:467.2px;top:379px;font-size:17.5px;color:#fff;transform:scaleX(0.9168);transform-origin:0 0;-webkit-text-stroke:0.25px #202020;">CAREERMODE</span>
<span class="t" style="left:859.2px;top:379px;font-size:17.5px;color:#dedede;transform:scaleX(1.0056);transform-origin:0 0;-webkit-text-stroke:0.25px #202020;">12.02.2022 12:19</span>
<span class="t" style="left:1128.8px;top:379px;font-size:17.5px;color:#dedede;transform:scaleX(1.0280);transform-origin:0 0;-webkit-text-stroke:0.25px #202020;">Dateiordner</span>
<svg class="b" style="left:440.6px;top:408.6px;" width="15" height="22" viewBox="0 0 15 22"><path d="M4 0H13.3V11.1L14.3 11.7V18.7H4z" fill="url(#gf)"/><path d="M0 0H4.5V21.3L0 18.8z" fill="url(#gfl)"/></svg>
<span class="t" style="left:467.2px;top:411px;font-size:17.5px;color:#fff;transform:scaleX(0.8897);transform-origin:0 0;-webkit-text-stroke:0.25px #202020;">COURSES</span>
<span class="t" style="left:859.2px;top:411px;font-size:17.5px;color:#dedede;transform:scaleX(1.0056);transform-origin:0 0;-webkit-text-stroke:0.25px #202020;">12.02.2022 12:19</span>
<span class="t" style="left:1128.8px;top:411px;font-size:17.5px;color:#dedede;transform:scaleX(1.0280);transform-origin:0 0;-webkit-text-stroke:0.25px #202020;">Dateiordner</span>
<svg class="b" style="left:440.6px;top:440.6px;" width="15" height="22" viewBox="0 0 15 22"><path d="M4 0H13.3V11.1L14.3 11.7V18.7H4z" fill="url(#gf)"/><path d="M0 0H4.5V21.3L0 18.8z" fill="url(#gfl)"/></svg>
<span class="t" style="left:467.2px;top:443px;font-size:17.5px;color:#fff;transform:scaleX(0.9334);transform-origin:0 0;-webkit-text-stroke:0.25px #202020;">GAMES</span>
<span class="t" style="left:859.2px;top:443px;font-size:17.5px;color:#dedede;transform:scaleX(1.0056);transform-origin:0 0;-webkit-text-stroke:0.25px #202020;">12.02.2022 12:36</span>
<span class="t" style="left:1128.8px;top:443px;font-size:17.5px;color:#dedede;transform:scaleX(1.0280);transform-origin:0 0;-webkit-text-stroke:0.25px #202020;">Dateiordner</span>
<svg class="b" style="left:440.6px;top:472.6px;" width="15" height="22" viewBox="0 0 15 22"><path d="M4 0H13.3V11.1L14.3 11.7V18.7H4z" fill="url(#gf)"/><path d="M0 0H4.5V21.3L0 18.8z" fill="url(#gfl)"/></svg>
<span class="t" style="left:467.2px;top:475px;font-size:17.5px;color:#fff;transform:scaleX(0.9492);transform-origin:0 0;-webkit-text-stroke:0.25px #202020;">LINKSND</span>
<span class="t" style="left:859.2px;top:475px;font-size:17.5px;color:#dedede;transform:scaleX(1.0056);transform-origin:0 0;-webkit-text-stroke:0.25px #202020;">12.02.2022 12:19</span>
<span class="t" style="left:1128.8px;top:475px;font-size:17.5px;color:#dedede;transform:scaleX(1.0280);transform-origin:0 0;-webkit-text-stroke:0.25px #202020;">Dateiordner</span>
<svg class="b" style="left:440.6px;top:504.6px;" width="15" height="22" viewBox="0 0 15 22"><path d="M4 0H13.3V11.1L14.3 11.7V18.7H4z" fill="url(#gf)"/><path d="M0 0H4.5V21.3L0 18.8z" fill="url(#gfl)"/></svg>
<span class="t" style="left:467.2px;top:507px;font-size:17.5px;color:#fff;transform:scaleX(0.9515);transform-origin:0 0;-webkit-text-stroke:0.25px #202020;">LinksPD</span>
<span class="t" style="left:859.2px;top:507px;font-size:17.5px;color:#dedede;transform:scaleX(1.0056);transform-origin:0 0;-webkit-text-stroke:0.25px #202020;">14.05.2023 08:31</span>
<span class="t" style="left:1128.8px;top:507px;font-size:17.5px;color:#dedede;transform:scaleX(1.0280);transform-origin:0 0;-webkit-text-stroke:0.25px #202020;">Dateiordner</span>
<svg class="b" style="left:440.6px;top:536.6px;" width="15" height="22" viewBox="0 0 15 22"><path d="M4 0H13.3V11.1L14.3 11.7V18.7H4z" fill="url(#gf)"/><path d="M0 0H4.5V21.3L0 18.8z" fill="url(#gfl)"/></svg>
<span class="t" style="left:467.2px;top:539px;font-size:17.5px;color:#fff;transform:scaleX(1.0112);transform-origin:0 0;-webkit-text-stroke:0.25px #202020;">PolyAni</span>
<span class="t" style="left:859.2px;top:539px;font-size:17.5px;color:#dedede;transform:scaleX(1.0056);transform-origin:0 0;-webkit-text-stroke:0.25px #202020;">12.02.2022 12:19</span>
<span class="t" style="left:1128.8px;top:539px;font-size:17.5px;color:#dedede;transform:scaleX(1.0280);transform-origin:0 0;-webkit-text-stroke:0.25px #202020;">Dateiordner</span>
<svg class="b" style="left:440.6px;top:568.6px;" width="15" height="22" viewBox="0 0 15 22"><path d="M4 0H13.3V11.1L14.3 11.7V18.7H4z" fill="url(#gf)"/><path d="M0 0H4.5V21.3L0 18.8z" fill="url(#gfl)"/></svg>
<span class="t" style="left:467.2px;top:571px;font-size:17.5px;color:#fff;transform:scaleX(0.9899);transform-origin:0 0;-webkit-text-stroke:0.25px #202020;">reshade-shaders</span>
<span class="t" style="left:859.2px;top:571px;font-size:17.5px;color:#dedede;transform:scaleX(1.0056);transform-origin:0 0;-webkit-text-stroke:0.25px #202020;">02.04.2023 14:30</span>
<span class="t" style="left:1128.8px;top:571px;font-size:17.5px;color:#dedede;transform:scaleX(1.0280);transform-origin:0 0;-webkit-text-stroke:0.25px #202020;">Dateiordner</span>
<svg class="b" style="left:440.6px;top:600.6px;" width="15" height="22" viewBox="0 0 15 22"><path d="M4 0H13.3V11.1L14.3 11.7V18.7H4z" fill="url(#gf)"/><path d="M0 0H4.5V21.3L0 18.8z" fill="url(#gfl)"/></svg>
<span class="t" style="left:467.2px;top:603px;font-size:17.5px;color:#fff;transform:scaleX(0.9531);transform-origin:0 0;-webkit-text-stroke:0.25px #202020;">skies</span>
<span class="t" style="left:859.2px;top:603px;font-size:17.5px;color:#dedede;transform:scaleX(1.0056);transform-origin:0 0;-webkit-text-stroke:0.25px #202020;">12.02.2022 12:36</span>
<span class="t" style="left:1128.8px;top:603px;font-size:17.5px;color:#dedede;transform:scaleX(1.0280);transform-origin:0 0;-webkit-text-stroke:0.25px #202020;">Dateiordner</span>
<svg class="b" style="left:440.6px;top:632.6px;" width="15" height="22" viewBox="0 0 15 22"><path d="M4 0H13.3V11.1L14.3 11.7V18.7H4z" fill="url(#gf)"/><path d="M0 0H4.5V21.3L0 18.8z" fill="url(#gfl)"/></svg>
<span class="t" style="left:467.2px;top:635px;font-size:17.5px;color:#fff;transform:scaleX(1.0083);transform-origin:0 0;-webkit-text-stroke:0.25px #202020;">WAVS</span>
<span class="t" style="left:859.2px;top:635px;font-size:17.5px;color:#dedede;transform:scaleX(1.0056);transform-origin:0 0;-webkit-text-stroke:0.25px #202020;">12.02.2022 12:19</span>
<span class="t" style="left:1128.8px;top:635px;font-size:17.5px;color:#dedede;transform:scaleX(1.0280);transform-origin:0 0;-webkit-text-stroke:0.25px #202020;">Dateiordner</span>
<svg class="b" style="left:439.6px;top:664.2px;" width="17" height="22" viewBox="0 0 17 22"><path d="M0.5 0H11.5L16.5 5V21.5H0.5z" fill="#f3f3f3"/><path d="M11.5 0V5H16.5z" fill="#c9c9c9"/><path d="M11.5 0.3V5H16.3" fill="none" stroke="#9a9a9a" stroke-width="0.6"/></svg>
<span class="t" style="left:467.2px;top:667px;font-size:17.5px;color:#fff;transform:scaleX(0.9084);transform-origin:0 0;-webkit-text-stroke:0.25px #202020;">BaseRes.res</span>
<span class="t" style="left:859.2px;top:667px;font-size:17.5px;color:#dedede;transform:scaleX(1.0056);transform-origin:0 0;-webkit-text-stroke:0.25px #202020;">24.08.2002 22:58</span>
<span class="t" style="left:1128.8px;top:667px;font-size:17.5px;color:#dedede;transform:scaleX(0.9436);transform-origin:0 0;-webkit-text-stroke:0.25px #202020;">RES-Datei</span>
<span class="t" style="left:1408.06px;top:667px;font-size:17.5px;color:#dedede;transform:scaleX(0.9225);transform-origin:100% 0;-webkit-text-stroke:0.25px #202020;">9 KB</span>
<svg class="b" style="left:437.2px;top:694.8px;" width="24" height="24" viewBox="0 0 24 24"><circle cx="12" cy="12" r="12" fill="#fbc116"/><path d="M12 12L1.6 6A12 12 0 0 1 22.4 6z" fill="#e33b2e"/><path d="M1.6 6A12 12 0 0 1 22.4 6H12z" fill="#e33b2e"/><path d="M12 12L1.6 6A12 12 0 0 0 12 24L17.2 15z" fill="#2da94f"/><path d="M12 12L22.4 6 H12z" fill="#e33b2e"/><path d="M22.4 6A12 12 0 0 1 12 24L17.2 15A6 6 0 0 0 17.2 9 L12 6z" fill="#fbc116"/><circle cx="12" cy="12" r="6.3" fill="#f4f8fb"/><circle cx="12" cy="12" r="4.8" fill="#3b78e7"/></svg>
<span class="t" style="left:467.2px;top:699px;font-size:17.5px;color:#fff;transform:scaleX(1.0279);transform-origin:0 0;-webkit-text-stroke:0.25px #202020;">BuildLog.htm</span>
<span class="t" style="left:859.2px;top:699px;font-size:17.5px;color:#dedede;transform:scaleX(1.0056);transform-origin:0 0;-webkit-text-stroke:0.25px #202020;">24.08.2002 22:59</span>
<span class="t" style="left:1128.8px;top:699px;font-size:17.5px;color:#dedede;transform:scaleX(0.9920);transform-origin:0 0;-webkit-text-stroke:0.25px #202020;">Chrome HTML Docu...</span>
<span class="t" style="left:1408.06px;top:699px;font-size:17.5px;color:#dedede;transform:scaleX(0.9225);transform-origin:100% 0;-webkit-text-stroke:0.25px #202020;">6 KB</span>
<svg class="b" style="left:439.6px;top:728.4px;" width="17" height="22" viewBox="0 0 17 22"><path d="M0.5 0H11.5L16.5 5V21.5H0.5z" fill="#f6f8fb"/><path d="M11.5 0V5H16.5z" fill="#c9c9c9"/><path d="M11.5 0.3V5H16.3" fill="none" stroke="#9a9a9a" stroke-width="0.6"/><rect x="4.2" y="7" width="8.8" height="8.6" rx="0.8" fill="#1f6fd0"/><path d="M4.6 15.2L8.6 10L12.6 15.2z" fill="#38b6f0"/><circle cx="11" cy="8.7" r="0.8" fill="#e8f4ff"/></svg>
<span class="t" style="left:467.2px;top:731px;font-size:17.5px;color:#fff;transform:scaleX(0.9664);transform-origin:0 0;-webkit-text-stroke:0.25px #202020;">career_mode_sin_curve.gif</span>
<span class="t" style="left:859.2px;top:731px;font-size:17.5px;color:#dedede;transform:scaleX(1.0056);transform-origin:0 0;-webkit-text-stroke:0.25px #202020;">27.01.2005 21:17</span>
<span class="t" style="left:1128.8px;top:731px;font-size:17.5px;color:#dedede;transform:scaleX(0.9757);transform-origin:0 0;-webkit-text-stroke:0.25px #202020;">GIF-Datei</span>
<span class="t" style="left:1408.06px;top:731px;font-size:17.5px;color:#dedede;transform:scaleX(0.9225);transform-origin:100% 0;-webkit-text-stroke:0.25px #202020;">9 KB</span>
<svg class="b" style="left:439.6px;top:760.2px;" width="17" height="22" viewBox="0 0 17 22"><path d="M0.5 0H11.5L16.5 5V21.5H0.5z" fill="#f3f3f3"/><path d="M11.5 0V5H16.5z" fill="#c9c9c9"/><path d="M11.5 0.3V5H16.3" fill="none" stroke="#9a9a9a" stroke-width="0.6"/><path d="M2.5 5.5H10.5" stroke="#8c8c8c" stroke-width="1"/><path d="M2.5 7.5H14.5" stroke="#8c8c8c" stroke-width="1"/><path d="M2.5 9.5H14.5" stroke="#8c8c8c" stroke-width="1"/><path d="M2.5 11.5H14.5" stroke="#8c8c8c" stroke-width="1"/><path d="M2.5 13.5H14.5" stroke="#8c8c8c" stroke-width="1"/><path d="M2.5 15.5H14.5" stroke="#8c8c8c" stroke-width="1"/><path d="M2.5 17.5H14.5" stroke="#8c8c8c" stroke-width="1"/><path d="M2.5 19.5H14.5" stroke="#8c8c8c" stroke-width="1"/></svg>
<span class="t" style="left:467.2px;top:763px;font-size:17.5px;color:#fff;transform:scaleX(1.0282);transform-origin:0 0;-webkit-text-stroke:0.25px #202020;">convert.txt</span>
<span class="t" style="left:859.2px;top:763px;font-size:17.5px;color:#dedede;transform:scaleX(1.0056);transform-origin:0 0;-webkit-text-stroke:0.25px #202020;">09.08.2002 20:40</span>
<span class="t" style="left:1128.8px;top:763px;font-size:17.5px;color:#dedede;transform:scaleX(1.0464);transform-origin:0 0;-webkit-text-stroke:0.25px #202020;">Textdokument</span>
<span class="t" style="left:1408.06px;top:763px;font-size:17.5px;color:#dedede;transform:scaleX(0.9225);transform-origin:100% 0;-webkit-text-stroke:0.25px #202020;">2 KB</span>
<svg class="b" style="left:439.6px;top:792.2px;" width="17" height="22" viewBox="0 0 17 22"><path d="M0.5 0H11.5L16.5 5V21.5H0.5z" fill="#f3f3f3"/><path d="M11.5 0V5H16.5z" fill="#c9c9c9"/><path d="M11.5 0.3V5H16.3" fill="none" stroke="#9a9a9a" stroke-width="0.6"/></svg>
<span class="t" style="left:467.2px;top:795px;font-size:17.5px;color:#fff;transform:scaleX(0.9849);transform-origin:0 0;-webkit-text-stroke:0.25px #202020;">credits.ls</span>
<span class="t" style="left:859.2px;top:795px;font-size:17.5px;color:#dedede;transform:scaleX(1.0056);transform-origin:0 0;-webkit-text-stroke:0.25px #202020;">08.08.2002 17:21</span>
<span class="t" style="left:1128.8px;top:795px;font-size:17.5px;color:#dedede;transform:scaleX(0.9694);transform-origin:0 0;-webkit-text-stroke:0.25px #202020;">LS-Datei</span>
<span class="t" style="left:1408.06px;top:795px;font-size:17.5px;color:#dedede;transform:scaleX(0.9225);transform-origin:100% 0;-webkit-text-stroke:0.25px #202020;">3 KB</span>
<svg class="b" style="left:439.6px;top:824.2px;" width="17" height="22" viewBox="0 0 17 22"><path d="M0.5 0H11.5L16.5 5V21.5H0.5z" fill="#f3f3f3"/><path d="M11.5 0V5H16.5z" fill="#c9c9c9"/><path d="M11.5 0.3V5H16.3" fill="none" stroke="#9a9a9a" stroke-width="0.6"/></svg>
<span class="t" style="left:467.2px;top:827px;font-size:17.5px;color:#fff;transform:scaleX(1.0160);transform-origin:0 0;-webkit-text-stroke:0.25px #202020;">Crowds.lib</span>
<span class="t" style="left:859.2px;top:827px;font-size:17.5px;color:#dedede;transform:scaleX(1.0056);transform-origin:0 0;-webkit-text-stroke:0.25px #202020;">14.09.2000 21:56</span>
<span class="t" style="left:1128.8px;top:827px;font-size:17.5px;color:#dedede;transform:scaleX(0.9733);transform-origin:0 0;-webkit-text-stroke:0.25px #202020;">LIB-Datei</span>
<span class="t" style="left:1374.00px;top:827px;font-size:17.5px;color:#dedede;transform:scaleX(0.9583);transform-origin:100% 0;-webkit-text-stroke:0.25px #202020;">2.294 KB</span>
<svg class="b" style="left:439.6px;top:856.2px;" width="17" height="22" viewBox="0 0 17 22"><path d="M0.5 0H11.5L16.5 5V21.5H0.5z" fill="#f1f3f5"/><path d="M11.5 0V5H16.5z" fill="#c9c9c9"/><path d="M11.5 0.3V5H16.3" fill="none" stroke="#9a9a9a" stroke-width="0.6"/><circle cx="6.3" cy="9.3" r="2.6" fill="none" stroke="#8d9196" stroke-width="0.9"/><circle cx="6.3" cy="9.3" r="0.99" fill="none" stroke="#8d9196" stroke-width="0.6"/><path d="M9.20 9.30L10.40 9.30" stroke="#8d9196" stroke-width="1.1"/><path d="M8.35 11.35L9.20 12.20" stroke="#8d9196" stroke-width="1.1"/><path d="M6.30 12.20L6.30 13.40" stroke="#8d9196" stroke-width="1.1"/><path d="M4.25 11.35L3.40 12.20" stroke="#8d9196" stroke-width="1.1"/><path d="M3.40 9.30L2.20 9.30" stroke="#8d9196" stroke-width="1.1"/><path d="M4.25 7.25L3.40 6.40" stroke="#8d9196" stroke-width="1.1"/><path d="M6.30 6.40L6.30 5.20" stroke="#8d9196" stroke-width="1.1"/><path d="M8.35 7.25L9.20 6.40" stroke="#8d9196" stroke-width="1.1"/><circle cx="10.8" cy="14.4" r="2.3" fill="none" stroke="#8d9196" stroke-width="0.9"/><circle cx="10.8" cy="14.4" r="0.87" fill="none" stroke="#8d9196" stroke-width="0.6"/><path d="M13.40 14.40L14.60 14.40" stroke="#8d9196" stroke-width="1.1"/><path d="M12.64 16.24L13.49 17.09" stroke="#8d9196" stroke-width="1.1"/><path d="M10.80 17.00L10.80 18.20" stroke="#8d9196" stroke-width="1.1"/><path d="M8.96 16.24L8.11 17.09" stroke="#8d9196" stroke-width="1.1"/><path d="M8.20 14.40L7.00 14.40" stroke="#8d9196" stroke-width="1.1"/><path d="M8.96 12.56L8.11 11.71" stroke="#8d9196" stroke-width="1.1"/><path d="M10.80 11.80L10.80 10.60" stroke="#8d9196" stroke-width="1.1"/><path d="M12.64 12.56L13.49 11.71" stroke="#8d9196" stroke-width="1.1"/></svg>
<span class="t" style="left:467.2px;top:859px;font-size:17.5px;color:#fff;transform:scaleX(1.0281);transform-origin:0 0;-webkit-text-stroke:0.25px #202020;">D3D8.dll</span>
<span class="t" style="left:859.2px;top:859px;font-size:17.5px;color:#dedede;transform:scaleX(1.0056);transform-origin:0 0;-webkit-text-stroke:0.25px #202020;">07.02.2022 15:19</span>
<span class="t" style="left:1128.8px;top:859px;font-size:17.5px;color:#dedede;transform:scaleX(1.0054);transform-origin:0 0;-webkit-text-stroke:0.25px #202020;">Anwendungserweiter...</span>
<span class="t" style="left:1388.60px;top:859px;font-size:17.5px;color:#dedede;transform:scaleX(0.9581);transform-origin:100% 0;-webkit-text-stroke:0.25px #202020;">332 KB</span>
<svg class="b" style="left:439.6px;top:888.2px;" width="17" height="22" viewBox="0 0 17 22"><path d="M0.5 0H11.5L16.5 5V21.5H0.5z" fill="#f1f3f5"/><path d="M11.5 0V5H16.5z" fill="#c9c9c9"/><path d="M11.5 0.3V5H16.3" fill="none" stroke="#9a9a9a" stroke-width="0.6"/><circle cx="6.3" cy="9.3" r="2.6" fill="none" stroke="#8d9196" stroke-width="0.9"/><circle cx="6.3" cy="9.3" r="0.99" fill="none" stroke="#8d9196" stroke-width="0.6"/><path d="M9.20 9.30L10.40 9.30" stroke="#8d9196" stroke-width="1.1"/><path d="M8.35 11.35L9.20 12.20" stroke="#8d9196" stroke-width="1.1"/><path d="M6.30 12.20L6.30 13.40" stroke="#8d9196" stroke-width="1.1"/><path d="M4.25 11.35L3.40 12.20" stroke="#8d9196" stroke-width="1.1"/><path d="M3.40 9.30L2.20 9.30" stroke="#8d9196" stroke-width="1.1"/><path d="M4.25 7.25L3.40 6.40" stroke="#8d9196" stroke-width="1.1"/><path d="M6.30 6.40L6.30 5.20" stroke="#8d9196" stroke-width="1.1"/><path d="M8.35 7.25L9.20 6.40" stroke="#8d9196" stroke-width="1.1"/><circle cx="10.8" cy="14.4" r="2.3" fill="none" stroke="#8d9196" stroke-width="0.9"/><circle cx="10.8" cy="14.4" r="0.87" fill="none" stroke="#8d9196" stroke-width="0.6"/><path d="M13.40 14.40L14.60 14.40" stroke="#8d9196" stroke-width="1.1"/><path d="M12.64 16.24L13.49 17.09" stroke="#8d9196" stroke-width="1.1"/><path d="M10.80 17.00L10.80 18.20" stroke="#8d9196" stroke-width="1.1"/><path d="M8.96 16.24L8.11 17.09" stroke="#8d9196" stroke-width="1.1"/><path d="M8.20 14.40L7.00 14.40" stroke="#8d9196" stroke-width="1.1"/><path d="M8.96 12.56L8.11 11.71" stroke="#8d9196" stroke-width="1.1"/><path d="M10.80 11.80L10.80 10.60" stroke="#8d9196" stroke-width="1.1"/><path d="M12.64 12.56L13.49 11.71" stroke="#8d9196" stroke-width="1.1"/></svg>
<span class="t" style="left:467.2px;top:891px;font-size:17.5px;color:#fff;transform:scaleX(1.0281);transform-origin:0 0;-webkit-text-stroke:0.25px #202020;">D3D9.dll</span>
<span class="t" style="left:859.2px;top:891px;font-size:17.5px;color:#dedede;transform:scaleX(1.0056);transform-origin:0 0;-webkit-text-stroke:0.25px #202020;">07.02.2022 15:19</span>
<span class="t" style="left:1128.8px;top:891px;font-size:17.5px;color:#dedede;transform:scaleX(1.0054);transform-origin:0 0;-webkit-text-stroke:0.25px #202020;">Anwendungserweiter...</span>
<span class="t" style="left:1388.60px;top:891px;font-size:17.5px;color:#dedede;transform:scaleX(0.9581);transform-origin:100% 0;-webkit-text-stroke:0.25px #202020;">386 KB</span>
<svg class="b" style="left:439.6px;top:920.2px;" width="17" height="22" viewBox="0 0 17 22"><path d="M0.5 0H11.5L16.5 5V21.5H0.5z" fill="#f1f3f5"/><path d="M11.5 0V5H16.5z" fill="#c9c9c9"/><path d="M11.5 0.3V5H16.3" fill="none" stroke="#9a9a9a" stroke-width="0.6"/><circle cx="6.3" cy="9.3" r="2.6" fill="none" stroke="#8d9196" stroke-width="0.9"/><circle cx="6.3" cy="9.3" r="0.99" fill="none" stroke="#8d9196" stroke-width="0.6"/><path d="M9.20 9.30L10.40 9.30" stroke="#8d9196" stroke-width="1.1"/><path d="M8.35 11.35L9.20 12.20" stroke="#8d9196" stroke-width="1.1"/><path d="M6.30 12.20L6.30 13.40" stroke="#8d9196" stroke-width="1.1"/><path d="M4.25 11.35L3.40 12.20" stroke="#8d9196" stroke-width="1.1"/><path d="M3.40 9.30L2.20 9.30" stroke="#8d9196" stroke-width="1.1"/><path d="M4.25 7.25L3.40 6.40" stroke="#8d9196" stroke-width="1.1"/><path d="M6.30 6.40L6.30 5.20" stroke="#8d9196" stroke-width="1.1"/><path d="M8.35 7.25L9.20 6.40" stroke="#8d9196" stroke-width="1.1"/><circle cx="10.8" cy="14.4" r="2.3" fill="none" stroke="#8d9196" stroke-width="0.9"/><circle cx="10.8" cy="14.4" r="0.87" fill="none" stroke="#8d9196" stroke-width="0.6"/><path d="M13.40 14.40L14.60 14.40" stroke="#8d9196" stroke-width="1.1"/><path d="M12.64 16.24L13.49 17.09" stroke="#8d9196" stroke-width="1.1"/><path d="M10.80 17.00L10.80 18.20" stroke="#8d9196" stroke-width="1.1"/><path d="M8.96 16.24L8.11 17.09" stroke="#8d9196" stroke-width="1.1"/><path d="M8.20 14.40L7.00 14.40" stroke="#8d9196" stroke-width="1.1"/><path d="M8.96 12.56L8.11 11.71" stroke="#8d9196" stroke-width="1.1"/><path d="M10.80 11.80L10.80 10.60" stroke="#8d9196" stroke-width="1.1"/><path d="M12.64 12.56L13.49 11.71" stroke="#8d9196" stroke-width="1.1"/></svg>
<span class="t" style="left:467.2px;top:923px;font-size:17.5px;color:#fff;transform:scaleX(1.0504);transform-origin:0 0;-webkit-text-stroke:0.25px #202020;">D3DImm.dll</span>
<span class="t" style="left:859.2px;top:923px;font-size:17.5px;color:#dedede;transform:scaleX(1.0056);transform-origin:0 0;-webkit-text-stroke:0.25px #202020;">07.02.2022 15:19</span>
<span class="t" style="left:1128.8px;top:923px;font-size:17.5px;color:#dedede;transform:scaleX(1.0054);transform-origin:0 0;-webkit-text-stroke:0.25px #202020;">Anwendungserweiter...</span>
<span class="t" style="left:1388.60px;top:923px;font-size:17.5px;color:#dedede;transform:scaleX(0.9581);transform-origin:100% 0;-webkit-text-stroke:0.25px #202020;">170 KB</span>
<svg class="b" style="left:439.6px;top:952.2px;" width="17" height="22" viewBox="0 0 17 22"><path d="M0.5 0H11.5L16.5 5V21.5H0.5z" fill="#f1f3f5"/><path d="M11.5 0V5H16.5z" fill="#c9c9c9"/><path d="M11.5 0.3V5H16.3" fill="none" stroke="#9a9a9a" stroke-width="0.6"/><circle cx="6.3" cy="9.3" r="2.6" fill="none" stroke="#8d9196" stroke-width="0.9"/><circle cx="6.3" cy="9.3" r="0.99" fill="none" stroke="#8d9196" stroke-width="0.6"/><path d="M9.20 9.30L10.40 9.30" stroke="#8d9196" stroke-width="1.1"/><path d="M8.35 11.35L9.20 12.20" stroke="#8d9196" stroke-width="1.1"/><path d="M6.30 12.20L6.30 13.40" stroke="#8d9196" stroke-width="1.1"/><path d="M4.25 11.35L3.40 12.20" stroke="#8d9196" stroke-width="1.1"/><path d="M3.40 9.30L2.20 9.30" stroke="#8d9196" stroke-width="1.1"/><path d="M4.25 7.25L3.40 6.40" stroke="#8d9196" stroke-width="1.1"/><path d="M6.30 6.40L6.30 5.20" stroke="#8d9196" stroke-width="1.1"/><path d="M8.35 7.25L9.20 6.40" stroke="#8d9196" stroke-width="1.1"/><circle cx="10.8" cy="14.4" r="2.3" fill="none" stroke="#8d9196" stroke-width="0.9"/><circle cx="10.8" cy="14.4" r="0.87" fill="none" stroke="#8d9196" stroke-width="0.6"/><path d="M13.40 14.40L14.60 14.40" stroke="#8d9196" stroke-width="1.1"/><path d="M12.64 16.24L13.49 17.09" stroke="#8d9196" stroke-width="1.1"/><path d="M10.80 17.00L10.80 18.20" stroke="#8d9196" stroke-width="1.1"/><path d="M8.96 16.24L8.11 17.09" stroke="#8d9196" stroke-width="1.1"/><path d="M8.20 14.40L7.00 14.40" stroke="#8d9196" stroke-width="1.1"/><path d="M8.96 12.56L8.11 11.71" stroke="#8d9196" stroke-width="1.1"/><path d="M10.80 11.80L10.80 10.60" stroke="#8d9196" stroke-width="1.1"/><path d="M12.64 12.56L13.49 11.71" stroke="#8d9196" stroke-width="1.1"/></svg>
<span class="t" style="left:467.2px;top:955px;font-size:17.5px;color:#fff;transform:scaleX(1.0283);transform-origin:0 0;-webkit-text-stroke:0.25px #202020;">DDraw.dll</span>
<span class="t" style="left:859.2px;top:955px;font-size:17.5px;color:#dedede;transform:scaleX(1.0056);transform-origin:0 0;-webkit-text-stroke:0.25px #202020;">07.02.2022 15:19</span>
<span class="t" style="left:1128.8px;top:955px;font-size:17.5px;color:#dedede;transform:scaleX(1.0054);transform-origin:0 0;-webkit-text-stroke:0.25px #202020;">Anwendungserweiter...</span>
<span class="t" style="left:1388.60px;top:955px;font-size:17.5px;color:#dedede;transform:scaleX(0.9581);transform-origin:100% 0;-webkit-text-stroke:0.25px #202020;">208 KB</span>
<svg class="b" style="left:436.6px;top:983.4px;" width="23" height="22" viewBox="0 0 23 22"><path d="M9.5 0.8L21.5 2.2 22.6 17.5 19 21.2z" fill="#e9e4dc"/><path d="M8.8 0.4L21 1.6 17.2 21.6 0.4 16.2z" fill="url(#gconf)"/><path d="M0.4 16.2L17.2 21.6 17.6 20.2 1.2 15z" fill="#d6f0f2"/></svg>
<span class="t" style="left:467.2px;top:987px;font-size:17.5px;color:#fff;transform:scaleX(1.0876);transform-origin:0 0;-webkit-text-stroke:0.25px #202020;">dgVoodoo.conf</span>
<span class="t" style="left:859.2px;top:987px;font-size:17.5px;color:#dedede;transform:scaleX(1.0056);transform-origin:0 0;-webkit-text-stroke:0.25px #202020;">12.02.2022 17:51</span>
<span class="t" style="left:1128.8px;top:987px;font-size:17.5px;color:#dedede;transform:scaleX(0.9869);transform-origin:0 0;-webkit-text-stroke:0.25px #202020;">CONF-Datei</span>
<span class="t" style="left:1398.33px;top:987px;font-size:17.5px;color:#dedede;transform:scaleX(0.9439);transform-origin:100% 0;-webkit-text-stroke:0.25px #202020;">16 KB</span>
<svg class="b" style="left:436.8px;top:1015px;" width="24.5" height="23.5" viewBox="0 0 24.5 23.5"><rect width="24.5" height="23.5" fill="url(#gdg)"/><text x="12.2" y="14.8" font-family="Liberation Sans, sans-serif" font-weight="bold" font-size="15" text-anchor="middle" fill="#ffcf1c" textLength="23" lengthAdjust="spacingAndGlyphs">dgVoodoo</text><text x="12.2" y="20.6" font-family="Liberation Sans, sans-serif" font-weight="bold" font-size="3.6" text-anchor="middle" fill="#f4d9b0" textLength="21.5" lengthAdjust="spacingAndGlyphs">Control Panel</text></svg>
<span class="t" style="left:467.2px;top:1019px;font-size:17.5px;color:#fff;transform:scaleX(1.0422);transform-origin:0 0;-webkit-text-stroke:0.25px #202020;">dgVoodooCpl.exe</span>
<span class="t" style="left:859.2px;top:1019px;font-size:17.5px;color:#dedede;transform:scaleX(1.0056);transform-origin:0 0;-webkit-text-stroke:0.25px #202020;">07.02.2022 15:19</span>
<span class="t" style="left:1128.8px;top:1019px;font-size:17.5px;color:#dedede;transform:scaleX(1.0385);transform-origin:0 0;-webkit-text-stroke:0.25px #202020;">Anwendung</span>
<span class="t" style="left:1388.60px;top:1019px;font-size:17.5px;color:#dedede;transform:scaleX(0.9581);transform-origin:100% 0;-webkit-text-stroke:0.25px #202020;">349 KB</span>
<svg class="b" style="left:437.9px;top:1051px;" width="22" height="17" viewBox="0 0 22 17"><rect width="22" height="17" fill="#f3f1f0"/><rect x="0.4" y="0.4" width="21.2" height="1.6" fill="#b9bcc2"/><rect x="6.2" y="4" width="7.8" height="10" fill="#1878d4"/><path d="M2 4.6H4.6M15.4 4.6H20.2" stroke="#9aa0a8" stroke-width="0.9"/><path d="M2 6.8H4.6M15.4 6.8H20.2" stroke="#9aa0a8" stroke-width="0.9"/><path d="M2 9H4.6M15.4 9H20.2" stroke="#9aa0a8" stroke-width="0.9"/><path d="M15.4 11.2H18.2" stroke="#9aa0a8" stroke-width="0.9"/></svg>
<span class="t" style="left:467.2px;top:1051px;font-size:17.5px;color:#fff;transform:scaleX(0.9878);transform-origin:0 0;-webkit-text-stroke:0.25px #202020;">dw15.exe</span>
<span class="t" style="left:859.2px;top:1051px;font-size:17.5px;color:#dedede;transform:scaleX(1.0056);transform-origin:0 0;-webkit-text-stroke:0.25px #202020;">09.02.2002 01:43</span>
<span class="t" style="left:1128.8px;top:1051px;font-size:17.5px;color:#dedede;transform:scaleX(1.0385);transform-origin:0 0;-webkit-text-stroke:0.25px #202020;">Anwendung</span>
<span class="t" style="left:1388.60px;top:1051px;font-size:17.5px;color:#dedede;transform:scaleX(0.9581);transform-origin:100% 0;-webkit-text-stroke:0.25px #202020;">179 KB</span>
<svg class="b" style="left:439.6px;top:1080.2px;" width="17" height="22" viewBox="0 0 17 22"><path d="M0.5 0H11.5L16.5 5V21.5H0.5z" fill="#f1f3f5"/><path d="M11.5 0V5H16.5z" fill="#c9c9c9"/><path d="M11.5 0.3V5H16.3" fill="none" stroke="#9a9a9a" stroke-width="0.6"/><circle cx="6.3" cy="9.3" r="2.6" fill="none" stroke="#8d9196" stroke-width="0.9"/><circle cx="6.3" cy="9.3" r="0.99" fill="none" stroke="#8d9196" stroke-width="0.6"/><path d="M9.20 9.30L10.40 9.30" stroke="#8d9196" stroke-width="1.1"/><path d="M8.35 11.35L9.20 12.20" stroke="#8d9196" stroke-width="1.1"/><path d="M6.30 12.20L6.30 13.40" stroke="#8d9196" stroke-width="1.1"/><path d="M4.25 11.35L3.40 12.20" stroke="#8d9196" stroke-width="1.1"/><path d="M3.40 9.30L2.20 9.30" stroke="#8d9196" stroke-width="1.1"/><path d="M4.25 7.25L3.40 6.40" stroke="#8d9196" stroke-width="1.1"/><path d="M6.30 6.40L6.30 5.20" stroke="#8d9196" stroke-width="1.1"/><path d="M8.35 7.25L9.20 6.40" stroke="#8d9196" stroke-width="1.1"/><circle cx="10.8" cy="14.4" r="2.3" fill="none" stroke="#8d9196" stroke-width="0.9"/><circle cx="10.8" cy="14.4" r="0.87" fill="none" stroke="#8d9196" stroke-width="0.6"/><path d="M13.40 14.40L14.60 14.40" stroke="#8d9196" stroke-width="1.1"/><path d="M12.64 16.24L13.49 17.09" stroke="#8d9196" stroke-width="1.1"/><path d="M10.80 17.00L10.80 18.20" stroke="#8d9196" stroke-width="1.1"/><path d="M8.96 16.24L8.11 17.09" stroke="#8d9196" stroke-width="1.1"/><path d="M8.20 14.40L7.00 14.40" stroke="#8d9196" stroke-width="1.1"/><path d="M8.96 12.56L8.11 11.71" stroke="#8d9196" stroke-width="1.1"/><path d="M10.80 11.80L10.80 10.60" stroke="#8d9196" stroke-width="1.1"/><path d="M12.64 12.56L13.49 11.71" stroke="#8d9196" stroke-width="1.1"/></svg>
<span class="t" style="left:467.2px;top:1083px;font-size:17.5px;color:#fff;transform:scaleX(1.0464);transform-origin:0 0;-webkit-text-stroke:0.25px #202020;">dxgi.dll</span>
<span class="t" style="left:859.2px;top:1083px;font-size:17.5px;color:#dedede;transform:scaleX(1.0056);transform-origin:0 0;-webkit-text-stroke:0.25px #202020;">02.04.2023 14:27</span>
<span class="t" style="left:1128.8px;top:1083px;font-size:17.5px;color:#dedede;transform:scaleX(1.0054);transform-origin:0 0;-webkit-text-stroke:0.25px #202020;">Anwendungserweiter...</span>
<span class="t" style="left:1374.00px;top:1083px;font-size:17.5px;color:#dedede;transform:scaleX(0.9583);transform-origin:100% 0;-webkit-text-stroke:0.25px #202020;">3.147 KB</span>
<svg class="b" style="left:439.6px;top:1112.2px;" width="17" height="22" viewBox="0 0 17 22"><path d="M0.5 0H11.5L16.5 5V21.5H0.5z" fill="#f1f3f5"/><path d="M11.5 0V5H16.5z" fill="#c9c9c9"/><path d="M11.5 0.3V5H16.3" fill="none" stroke="#9a9a9a" stroke-width="0.6"/><circle cx="6.3" cy="9.3" r="2.6" fill="none" stroke="#8d9196" stroke-width="0.9"/><circle cx="6.3" cy="9.3" r="0.99" fill="none" stroke="#8d9196" stroke-width="0.6"/><path d="M9.20 9.30L10.40 9.30" stroke="#8d9196" stroke-width="1.1"/><path d="M8.35 11.35L9.20 12.20" stroke="#8d9196" stroke-width="1.1"/><path d="M6.30 12.20L6.30 13.40" stroke="#8d9196" stroke-width="1.1"/><path d="M4.25 11.35L3.40 12.20" stroke="#8d9196" stroke-width="1.1"/><path d="M3.40 9.30L2.20 9.30" stroke="#8d9196" stroke-width="1.1"/><path d="M4.25 7.25L3.40 6.40" stroke="#8d9196" stroke-width="1.1"/><path d="M6.30 6.40L6.30 5.20" stroke="#8d9196" stroke-width="1.1"/><path d="M8.35 7.25L9.20 6.40" stroke="#8d9196" stroke-width="1.1"/><circle cx="10.8" cy="14.4" r="2.3" fill="none" stroke="#8d9196" stroke-width="0.9"/><circle cx="10.8" cy="14.4" r="0.87" fill="none" stroke="#8d9196" stroke-width="0.6"/><path d="M13.40 14.40L14.60 14.40" stroke="#8d9196" stroke-width="1.1"/><path d="M12.64 16.24L13.49 17.09" stroke="#8d9196" stroke-width="1.1"/><path d="M10.80 17.00L10.80 18.20" stroke="#8d9196" stroke-width="1.1"/><path d="M8.96 16.24L8.11 17.09" stroke="#8d9196" stroke-width="1.1"/><path d="M8.20 14.40L7.00 14.40" stroke="#8d9196" stroke-width="1.1"/><path d="M8.96 12.56L8.11 11.71" stroke="#8d9196" stroke-width="1.1"/><path d="M10.80 11.80L10.80 10.60" stroke="#8d9196" stroke-width="1.1"/><path d="M12.64 12.56L13.49 11.71" stroke="#8d9196" stroke-width="1.1"/></svg>
<span class="t" style="left:467.2px;top:1115px;font-size:17.5px;color:#fff;transform:scaleX(0.9210);transform-origin:0 0;-webkit-text-stroke:0.25px #202020;">EBUEula.dll</span>
<span class="t" style="left:859.2px;top:1115px;font-size:17.5px;color:#dedede;transform:scaleX(1.0153);transform-origin:0 0;-webkit-text-stroke:0.25px #202020;">11.06.2002 03:20</span>
<span class="t" style="left:1128.8px;top:1115px;font-size:17.5px;color:#dedede;transform:scaleX(1.0054);transform-origin:0 0;-webkit-text-stroke:0.25px #202020;">Anwendungserweiter...</span>
<span class="t" style="left:1398.33px;top:1115px;font-size:17.5px;color:#dedede;transform:scaleX(0.9439);transform-origin:100% 0;-webkit-text-stroke:0.25px #202020;">53 KB</span>
<svg class="b" style="left:439.6px;top:1144.4px;" width="17" height="22" viewBox="0 0 17 22"><path d="M0.5 0H11.5L16.5 5V21.5H0.5z" fill="#8e8e8e"/><path d="M11.5 0V5H16.5z" fill="#777"/><path d="M11.5 0.3V5H16.3" fill="none" stroke="#9a9a9a" stroke-width="0.6"/></svg>
<span class="t" style="left:467.2px;top:1147px;font-size:17.5px;color:#fff;transform:scaleX(0.9529);transform-origin:0 0;-webkit-text-stroke:0.25px #202020;">EBUSetup.sem</span>
<span class="t" style="left:859.2px;top:1147px;font-size:17.5px;color:#dedede;transform:scaleX(1.0056);transform-origin:0 0;-webkit-text-stroke:0.25px #202020;">12.02.2022 12:19</span>
<span class="t" style="left:1128.8px;top:1147px;font-size:17.5px;color:#dedede;transform:scaleX(0.9810);transform-origin:0 0;-webkit-text-stroke:0.25px #202020;">SEM-Datei</span>
<span class="t" style="left:1408.06px;top:1147px;font-size:17.5px;color:#dedede;transform:scaleX(0.9225);transform-origin:100% 0;-webkit-text-stroke:0.25px #202020;">0 KB</span>
<svg class="b" style="left:437px;top:1175.2px;" width="24" height="22" viewBox="0 0 24 22"><path d="M5.3 0.4H18L23 5.4V21.6H5.3z" fill="#f4f4f6"/><path d="M18 0.4V5.4H23" fill="#d5d5da" stroke="#555" stroke-width="0.7"/><path d="M23.4 5.6V21.8" stroke="#222" stroke-width="0.8"/><path d="M9 12.5H20" stroke="#b4b8d8" stroke-width="0.9"/><path d="M9 14.5H20" stroke="#b4b8d8" stroke-width="0.9"/><path d="M9 16.5H20" stroke="#b4b8d8" stroke-width="0.9"/><path d="M15 7H17.5M15 9H19" stroke="#c9c9c9" stroke-width="0.9"/><rect x="0" y="2.2" width="12" height="11.6" fill="#141c78"/><rect x="1.2" y="3.4" width="9.6" height="1.6" fill="#e8eaf6"/><text x="6" y="12.4" font-family="Liberation Sans, sans-serif" font-weight="bold" font-size="8.6" text-anchor="middle" fill="#ffffff">W</text></svg>
<span class="t" style="left:467.2px;top:1179px;font-size:17.5px;color:#fff;transform:scaleX(0.9934);transform-origin:0 0;-webkit-text-stroke:0.25px #202020;">Editing_Rosters.rtf</span>
<span class="t" style="left:859.2px;top:1179px;font-size:17.5px;color:#dedede;transform:scaleX(1.0153);transform-origin:0 0;-webkit-text-stroke:0.25px #202020;">04.11.2004 23:44</span>
<span class="t" style="left:1128.8px;top:1179px;font-size:17.5px;color:#dedede;transform:scaleX(1.0005);transform-origin:0 0;-webkit-text-stroke:0.25px #202020;">Rich Text Format</span>
<span class="t" style="left:1408.06px;top:1179px;font-size:17.5px;color:#dedede;transform:scaleX(0.9225);transform-origin:100% 0;-webkit-text-stroke:0.25px #202020;">4 KB</span>
<svg class="b" style="left:439.6px;top:1208.2px;" width="17" height="22" viewBox="0 0 17 22"><path d="M0.5 0H11.5L16.5 5V21.5H0.5z" fill="#f3f3f3"/><path d="M11.5 0V5H16.5z" fill="#c9c9c9"/><path d="M11.5 0.3V5H16.3" fill="none" stroke="#9a9a9a" stroke-width="0.6"/><path d="M2.5 5.5H10.5" stroke="#8c8c8c" stroke-width="1"/><path d="M2.5 7.5H14.5" stroke="#8c8c8c" stroke-width="1"/><path d="M2.5 9.5H14.5" stroke="#8c8c8c" stroke-width="1"/><path d="M2.5 11.5H14.5" stroke="#8c8c8c" stroke-width="1"/><path d="M2.5 13.5H14.5" stroke="#8c8c8c" stroke-width="1"/><path d="M2.5 15.5H14.5" stroke="#8c8c8c" stroke-width="1"/><path d="M2.5 17.5H14.5" stroke="#8c8c8c" stroke-width="1"/><path d="M2.5 19.5H14.5" stroke="#8c8c8c" stroke-width="1"/></svg>
<span class="t" style="left:467.2px;top:1211px;font-size:17.5px;color:#fff;transform:scaleX(0.9690);transform-origin:0 0;-webkit-text-stroke:0.25px #202020;">ELTournament-Final_locked_ID.TXT</span>
<span class="t" style="left:859.2px;top:1211px;font-size:17.5px;color:#dedede;transform:scaleX(1.0056);transform-origin:0 0;-webkit-text-stroke:0.25px #202020;">26.08.2022 10:27</span>
<span class="t" style="left:1128.8px;top:1211px;font-size:17.5px;color:#dedede;transform:scaleX(1.0464);transform-origin:0 0;-webkit-text-stroke:0.25px #202020;">Textdokument</span>
<span class="t" style="left:1408.06px;top:1211px;font-size:17.5px;color:#dedede;transform:scaleX(0.9225);transform-origin:100% 0;-webkit-text-stroke:0.25px #202020;">1 KB</span>
<svg class="b" style="left:436.4px;top:1240.3px;" width="21" height="23" viewBox="0 0 21 23"><g transform="translate(3.5,0)"><path d="M0.5 0H11.5L16.5 5V21.5H0.5z" fill="#e6f3fb"/><path d="M11.5 0V5H16.5z" fill="#c9c9c9"/><path d="M11.5 0.3V5H16.3" fill="none" stroke="#9a9a9a" stroke-width="0.6"/></g><rect x="0.5" y="10.5" width="3.7" height="3.7" fill="#1f7fc4"/><rect x="1.3" y="11.3" width="1.6" height="1.6" fill="#7fd4f4"/><rect x="4.6" y="10.5" width="3.7" height="3.7" fill="#2aa6dc"/><rect x="5.3999999999999995" y="11.3" width="1.6" height="1.6" fill="#7fd4f4"/><rect x="8.7" y="10.5" width="3.7" height="3.7" fill="#1f7fc4"/><rect x="9.5" y="11.3" width="1.6" height="1.6" fill="#7fd4f4"/><rect x="0.5" y="14.6" width="3.7" height="3.7" fill="#2aa6dc"/><rect x="1.3" y="15.4" width="1.6" height="1.6" fill="#7fd4f4"/><rect x="4.6" y="14.6" width="3.7" height="3.7" fill="#1f7fc4"/><rect x="5.3999999999999995" y="15.4" width="1.6" height="1.6" fill="#7fd4f4"/><rect x="8.7" y="14.6" width="3.7" height="3.7" fill="#2aa6dc"/><rect x="9.5" y="15.4" width="1.6" height="1.6" fill="#7fd4f4"/><rect x="0.5" y="18.7" width="3.7" height="3.7" fill="#1f7fc4"/><rect x="1.3" y="19.5" width="1.6" height="1.6" fill="#7fd4f4"/><rect x="4.6" y="18.7" width="3.7" height="3.7" fill="#2aa6dc"/><rect x="5.3999999999999995" y="19.5" width="1.6" height="1.6" fill="#7fd4f4"/><rect x="8.7" y="18.7" width="3.7" height="3.7" fill="#1f7fc4"/><rect x="9.5" y="19.5" width="1.6" height="1.6" fill="#7fd4f4"/><rect x="6" y="5.5" width="3.7" height="3.7" fill="#2aa6dc"/><rect x="6.8" y="6.3" width="1.6" height="1.6" fill="#7fd4f4"/><rect x="12.6" y="7.6" width="3.7" height="3.7" fill="#1f7fc4"/><rect x="13.4" y="8.4" width="1.6" height="1.6" fill="#7fd4f4"/></svg>
<span class="t" style="left:467.2px;top:1243px;font-size:17.5px;color:#fff;transform:scaleX(0.9358);transform-origin:0 0;-webkit-text-stroke:0.25px #202020;">EULA.reg</span>
<span class="t" style="left:859.2px;top:1243px;font-size:17.5px;color:#dedede;transform:scaleX(1.0056);transform-origin:0 0;-webkit-text-stroke:0.25px #202020;">03.07.2001 19:23</span>
<span class="t" style="left:1128.8px;top:1243px;font-size:17.5px;color:#dedede;transform:scaleX(1.0053);transform-origin:0 0;-webkit-text-stroke:0.25px #202020;">Registrierungseinträge</span>
<span class="t" style="left:1408.06px;top:1243px;font-size:17.5px;color:#dedede;transform:scaleX(0.9225);transform-origin:100% 0;-webkit-text-stroke:0.25px #202020;">1 KB</span>
<svg class="b" style="left:437px;top:1271.2px;" width="24" height="22" viewBox="0 0 24 22"><path d="M5.3 0.4H18L23 5.4V21.6H5.3z" fill="#f4f4f6"/><path d="M18 0.4V5.4H23" fill="#d5d5da" stroke="#555" stroke-width="0.7"/><path d="M23.4 5.6V21.8" stroke="#222" stroke-width="0.8"/><path d="M9 12.5H20" stroke="#b4b8d8" stroke-width="0.9"/><path d="M9 14.5H20" stroke="#b4b8d8" stroke-width="0.9"/><path d="M9 16.5H20" stroke="#b4b8d8" stroke-width="0.9"/><path d="M15 7H17.5M15 9H19" stroke="#c9c9c9" stroke-width="0.9"/><rect x="0" y="2.2" width="12" height="11.6" fill="#141c78"/><rect x="1.2" y="3.4" width="9.6" height="1.6" fill="#e8eaf6"/><text x="6" y="12.4" font-family="Liberation Sans, sans-serif" font-weight="bold" font-size="8.6" text-anchor="middle" fill="#ffffff">W</text></svg>
<span class="t" style="left:467.2px;top:1275px;font-size:17.5px;color:#fff;transform:scaleX(0.8780);transform-origin:0 0;-webkit-text-stroke:0.25px #202020;">EULA.RTF</span>
<span class="t" style="left:859.2px;top:1275px;font-size:17.5px;color:#dedede;transform:scaleX(1.0056);transform-origin:0 0;-webkit-text-stroke:0.25px #202020;">16.08.2000 00:32</span>
<span class="t" style="left:1128.8px;top:1275px;font-size:17.5px;color:#dedede;transform:scaleX(1.0005);transform-origin:0 0;-webkit-text-stroke:0.25px #202020;">Rich Text Format</span>
<span class="t" style="left:1388.60px;top:1275px;font-size:17.5px;color:#dedede;transform:scaleX(0.9581);transform-origin:100% 0;-webkit-text-stroke:0.25px #202020;">262 KB</span>
<svg class="b" style="left:439.6px;top:1304.2px;" width="17" height="22" viewBox="0 0 17 22"><path d="M0.5 0H11.5L16.5 5V21.5H0.5z" fill="#f3f3f3"/><path d="M11.5 0V5H16.5z" fill="#c9c9c9"/><path d="M11.5 0.3V5H16.3" fill="none" stroke="#9a9a9a" stroke-width="0.6"/></svg>
<span class="t" style="left:467.2px;top:1307px;font-size:17.5px;color:#fff;transform:scaleX(1.0070);transform-origin:0 0;-webkit-text-stroke:0.25px #202020;">gamedata.ls</span>
<span class="t" style="left:859.2px;top:1307px;font-size:17.5px;color:#dedede;transform:scaleX(1.0056);transform-origin:0 0;-webkit-text-stroke:0.25px #202020;">14.08.2002 04:39</span>
<span class="t" style="left:1128.8px;top:1307px;font-size:17.5px;color:#dedede;transform:scaleX(0.9694);transform-origin:0 0;-webkit-text-stroke:0.25px #202020;">LS-Datei</span>
<span class="t" style="left:1398.33px;top:1307px;font-size:17.5px;color:#dedede;transform:scaleX(0.9439);transform-origin:100% 0;-webkit-text-stroke:0.25px #202020;">72 KB</span>
<svg class="b" style="left:439.6px;top:1336.2px;" width="17" height="22" viewBox="0 0 17 22"><path d="M0.5 0H11.5L16.5 5V21.5H0.5z" fill="#f1f3f5"/><path d="M11.5 0V5H16.5z" fill="#c9c9c9"/><path d="M11.5 0.3V5H16.3" fill="none" stroke="#9a9a9a" stroke-width="0.6"/><circle cx="6.3" cy="9.3" r="2.6" fill="none" stroke="#8d9196" stroke-width="0.9"/><circle cx="6.3" cy="9.3" r="0.99" fill="none" stroke="#8d9196" stroke-width="0.6"/><path d="M9.20 9.30L10.40 9.30" stroke="#8d9196" stroke-width="1.1"/><path d="M8.35 11.35L9.20 12.20" stroke="#8d9196" stroke-width="1.1"/><path d="M6.30 12.20L6.30 13.40" stroke="#8d9196" stroke-width="1.1"/><path d="M4.25 11.35L3.40 12.20" stroke="#8d9196" stroke-width="1.1"/><path d="M3.40 9.30L2.20 9.30" stroke="#8d9196" stroke-width="1.1"/><path d="M4.25 7.25L3.40 6.40" stroke="#8d9196" stroke-width="1.1"/><path d="M6.30 6.40L6.30 5.20" stroke="#8d9196" stroke-width="1.1"/><path d="M8.35 7.25L9.20 6.40" stroke="#8d9196" stroke-width="1.1"/><circle cx="10.8" cy="14.4" r="2.3" fill="none" stroke="#8d9196" stroke-width="0.9"/><circle cx="10.8" cy="14.4" r="0.87" fill="none" stroke="#8d9196" stroke-width="0.6"/><path d="M13.40 14.40L14.60 14.40" stroke="#8d9196" stroke-width="1.1"/><path d="M12.64 16.24L13.49 17.09" stroke="#8d9196" stroke-width="1.1"/><path d="M10.80 17.00L10.80 18.20" stroke="#8d9196" stroke-width="1.1"/><path d="M8.96 16.24L8.11 17.09" stroke="#8d9196" stroke-width="1.1"/><path d="M8.20 14.40L7.00 14.40" stroke="#8d9196" stroke-width="1.1"/><path d="M8.96 12.56L8.11 11.71" stroke="#8d9196" stroke-width="1.1"/><path d="M10.80 11.80L10.80 10.60" stroke="#8d9196" stroke-width="1.1"/><path d="M12.64 12.56L13.49 11.71" stroke="#8d9196" stroke-width="1.1"/></svg>
<span class="t" style="left:467.2px;top:1339px;font-size:17.5px;color:#fff;transform:scaleX(1.0281);transform-origin:0 0;-webkit-text-stroke:0.25px #202020;">GolfAni.dll</span>
<span class="t" style="left:859.2px;top:1339px;font-size:17.5px;color:#dedede;transform:scaleX(1.0056);transform-origin:0 0;-webkit-text-stroke:0.25px #202020;">20.02.2002 01:18</span>
<span class="t" style="left:1128.8px;top:1339px;font-size:17.5px;color:#dedede;transform:scaleX(1.0054);transform-origin:0 0;-webkit-text-stroke:0.25px #202020;">Anwendungserweiter...</span>
<span class="t" style="left:1398.33px;top:1339px;font-size:17.5px;color:#dedede;transform:scaleX(0.9439);transform-origin:100% 0;-webkit-text-stroke:0.25px #202020;">64 KB</span>
<svg class="b" style="left:439.6px;top:1368.2px;" width="17" height="22" viewBox="0 0 17 22"><path d="M0.5 0H11.5L16.5 5V21.5H0.5z" fill="#f3f3f3"/><path d="M11.5 0V5H16.5z" fill="#c9c9c9"/><path d="M11.5 0.3V5H16.3" fill="none" stroke="#9a9a9a" stroke-width="0.6"/></svg>
<span class="t" style="left:467.2px;top:1371px;font-size:17.5px;color:#fff;transform:scaleX(0.9923);transform-origin:0 0;-webkit-text-stroke:0.25px #202020;">graphics.ls</span>
<span class="t" style="left:859.2px;top:1371px;font-size:17.5px;color:#dedede;transform:scaleX(1.0056);transform-origin:0 0;-webkit-text-stroke:0.25px #202020;">07.08.2002 06:48</span>
<span class="t" style="left:1128.8px;top:1371px;font-size:17.5px;color:#dedede;transform:scaleX(0.9694);transform-origin:0 0;-webkit-text-stroke:0.25px #202020;">LS-Datei</span>
<span class="t" style="left:1374.00px;top:1371px;font-size:17.5px;color:#dedede;transform:scaleX(0.9583);transform-origin:100% 0;-webkit-text-stroke:0.25px #202020;">8.575 KB</span>
<svg class="b" style="left:439.6px;top:1400.2px;" width="17" height="22" viewBox="0 0 17 22"><path d="M0.5 0H11.5L16.5 5V21.5H0.5z" fill="#f3f3f3"/><path d="M11.5 0V5H16.5z" fill="#c9c9c9"/><path d="M11.5 0.3V5H16.3" fill="none" stroke="#9a9a9a" stroke-width="0.6"/><path d="M2.5 5.5H10.5" stroke="#8c8c8c" stroke-width="1"/><path d="M2.5 7.5H14.5" stroke="#8c8c8c" stroke-width="1"/><path d="M2.5 9.5H14.5" stroke="#8c8c8c" stroke-width="1"/><path d="M2.5 11.5H14.5" stroke="#8c8c8c" stroke-width="1"/><path d="M2.5 13.5H14.5" stroke="#8c8c8c" stroke-width="1"/><path d="M2.5 15.5H14.5" stroke="#8c8c8c" stroke-width="1"/><path d="M2.5 17.5H14.5" stroke="#8c8c8c" stroke-width="1"/><path d="M2.5 19.5H14.5" stroke="#8c8c8c" stroke-width="1"/></svg>
<span class="t" style="left:467.2px;top:1403px;font-size:17.5px;color:#fff;transform:scaleX(1.0011);transform-origin:0 0;-webkit-text-stroke:0.25px #202020;">GraphicSettings.txt</span>
<span class="t" style="left:859.2px;top:1403px;font-size:17.5px;color:#dedede;transform:scaleX(1.0056);transform-origin:0 0;-webkit-text-stroke:0.25px #202020;">27.03.2024 09:42</span>
<span class="t" style="left:1128.8px;top:1403px;font-size:17.5px;color:#dedede;transform:scaleX(1.0464);transform-origin:0 0;-webkit-text-stroke:0.25px #202020;">Textdokument</span>
<span class="t" style="left:1388.60px;top:1403px;font-size:17.5px;color:#dedede;transform:scaleX(0.9581);transform-origin:100% 0;-webkit-text-stroke:0.25px #202020;">121 KB</span>
<svg class="b" style="left:439.6px;top:1432.2px;" width="17" height="22" viewBox="0 0 17 22"><path d="M0.5 0H11.5L16.5 5V21.5H0.5z" fill="#f1f3f5"/><path d="M11.5 0V5H16.5z" fill="#c9c9c9"/><path d="M11.5 0.3V5H16.3" fill="none" stroke="#9a9a9a" stroke-width="0.6"/><circle cx="6.3" cy="9.3" r="2.6" fill="none" stroke="#8d9196" stroke-width="0.9"/><circle cx="6.3" cy="9.3" r="0.99" fill="none" stroke="#8d9196" stroke-width="0.6"/><path d="M9.20 9.30L10.40 9.30" stroke="#8d9196" stroke-width="1.1"/><path d="M8.35 11.35L9.20 12.20" stroke="#8d9196" stroke-width="1.1"/><path d="M6.30 12.20L6.30 13.40" stroke="#8d9196" stroke-width="1.1"/><path d="M4.25 11.35L3.40 12.20" stroke="#8d9196" stroke-width="1.1"/><path d="M3.40 9.30L2.20 9.30" stroke="#8d9196" stroke-width="1.1"/><path d="M4.25 7.25L3.40 6.40" stroke="#8d9196" stroke-width="1.1"/><path d="M6.30 6.40L6.30 5.20" stroke="#8d9196" stroke-width="1.1"/><path d="M8.35 7.25L9.20 6.40" stroke="#8d9196" stroke-width="1.1"/><circle cx="10.8" cy="14.4" r="2.3" fill="none" stroke="#8d9196" stroke-width="0.9"/><circle cx="10.8" cy="14.4" r="0.87" fill="none" stroke="#8d9196" stroke-width="0.6"/><path d="M13.40 14.40L14.60 14.40" stroke="#8d9196" stroke-width="1.1"/><path d="M12.64 16.24L13.49 17.09" stroke="#8d9196" stroke-width="1.1"/><path d="M10.80 17.00L10.80 18.20" stroke="#8d9196" stroke-width="1.1"/><path d="M8.96 16.24L8.11 17.09" stroke="#8d9196" stroke-width="1.1"/><path d="M8.20 14.40L7.00 14.40" stroke="#8d9196" stroke-width="1.1"/><path d="M8.96 12.56L8.11 11.71" stroke="#8d9196" stroke-width="1.1"/><path d="M10.80 11.80L10.80 10.60" stroke="#8d9196" stroke-width="1.1"/><path d="M12.64 12.56L13.49 11.71" stroke="#8d9196" stroke-width="1.1"/></svg>
<span class="t" style="left:467.2px;top:1435px;font-size:17.5px;color:#fff;transform:scaleX(1.0018);transform-origin:0 0;-webkit-text-stroke:0.25px #202020;">GunDll.dll</span>
<span class="t" style="left:859.2px;top:1435px;font-size:17.5px;color:#dedede;transform:scaleX(1.0056);transform-origin:0 0;-webkit-text-stroke:0.25px #202020;">15.05.2002 01:13</span>
<span class="t" style="left:1128.8px;top:1435px;font-size:17.5px;color:#dedede;transform:scaleX(1.0054);transform-origin:0 0;-webkit-text-stroke:0.25px #202020;">Anwendungserweiter...</span>
<span class="t" style="left:1388.60px;top:1435px;font-size:17.5px;color:#dedede;transform:scaleX(0.9581);transform-origin:100% 0;-webkit-text-stroke:0.25px #202020;">373 KB</span>
<svg class="b" style="left:439.6px;top:1464.2px;" width="17" height="22" viewBox="0 0 17 22"><path d="M0.5 0H11.5L16.5 5V21.5H0.5z" fill="#f3f3f3"/><path d="M11.5 0V5H16.5z" fill="#c9c9c9"/><path d="M11.5 0.3V5H16.3" fill="none" stroke="#9a9a9a" stroke-width="0.6"/></svg>
<span class="t" style="left:467.2px;top:1467px;font-size:17.5px;color:#fff;transform:scaleX(1.0115);transform-origin:0 0;-webkit-text-stroke:0.25px #202020;">help.hst</span>
<span class="t" style="left:859.2px;top:1467px;font-size:17.5px;color:#dedede;transform:scaleX(1.0056);transform-origin:0 0;-webkit-text-stroke:0.25px #202020;">12.02.2022 12:45</span>
<span class="t" style="left:1128.8px;top:1467px;font-size:17.5px;color:#dedede;transform:scaleX(0.9911);transform-origin:0 0;-webkit-text-stroke:0.25px #202020;">HST-Datei</span>
<span class="t" style="left:1398.33px;top:1467px;font-size:17.5px;color:#dedede;transform:scaleX(0.9439);transform-origin:100% 0;-webkit-text-stroke:0.25px #202020;">10 KB</span>
<svg class="b" style="left:439.6px;top:1496.2px;" width="17" height="22" viewBox="0 0 17 22"><path d="M0.5 0H11.5L16.5 5V21.5H0.5z" fill="#f3f3f3"/><path d="M11.5 0V5H16.5z" fill="#c9c9c9"/><path d="M11.5 0.3V5H16.3" fill="none" stroke="#9a9a9a" stroke-width="0.6"/></svg>
<span class="t" style="left:467.2px;top:1499px;font-size:17.5px;color:#fff;transform:scaleX(0.9884);transform-origin:0 0;-webkit-text-stroke:0.25px #202020;">help.ls</span>
<span class="t" style="left:859.2px;top:1499px;font-size:17.5px;color:#dedede;transform:scaleX(1.0056);transform-origin:0 0;-webkit-text-stroke:0.25px #202020;">15.08.2002 01:19</span>
<span class="t" style="left:1128.8px;top:1499px;font-size:17.5px;color:#dedede;transform:scaleX(0.9694);transform-origin:0 0;-webkit-text-stroke:0.25px #202020;">LS-Datei</span>
<span class="t" style="left:1374.00px;top:1499px;font-size:17.5px;color:#dedede;transform:scaleX(0.9583);transform-origin:100% 0;-webkit-text-stroke:0.25px #202020;">6.379 KB</span>
<svg class="b" style="left:437.9px;top:1531px;" width="22" height="17" viewBox="0 0 22 17"><rect width="22" height="17" fill="#f3f1f0"/><rect x="0.4" y="0.4" width="21.2" height="1.6" fill="#b9bcc2"/><rect x="6.2" y="4" width="7.8" height="10" fill="#1878d4"/><path d="M2 4.6H4.6M15.4 4.6H20.2" stroke="#9aa0a8" stroke-width="0.9"/><path d="M2 6.8H4.6M15.4 6.8H20.2" stroke="#9aa0a8" stroke-width="0.9"/><path d="M2 9H4.6M15.4 9H20.2" stroke="#9aa0a8" stroke-width="0.9"/><path d="M15.4 11.2H18.2" stroke="#9aa0a8" stroke-width="0.9"/></svg>
<span class="t" style="left:467.2px;top:1531px;font-size:17.5px;color:#fff;transform:scaleX(0.9691);transform-origin:0 0;-webkit-text-stroke:0.25px #202020;">IrisInst.exe</span>
<span class="t" style="left:859.2px;top:1531px;font-size:17.5px;color:#dedede;transform:scaleX(1.0056);transform-origin:0 0;-webkit-text-stroke:0.25px #202020;">01.08.2002 23:08</span>
<span class="t" style="left:1128.8px;top:1531px;font-size:17.5px;color:#dedede;transform:scaleX(1.0385);transform-origin:0 0;-webkit-text-stroke:0.25px #202020;">Anwendung</span>
<span class="t" style="left:1398.33px;top:1531px;font-size:17.5px;color:#dedede;transform:scaleX(0.9439);transform-origin:100% 0;-webkit-text-stroke:0.25px #202020;">52 KB</span>
<svg class="b" style="left:439.6px;top:1560.2px;" width="17" height="22" viewBox="0 0 17 22"><path d="M0.5 0H11.5L16.5 5V21.5H0.5z" fill="#f3f3f3"/><path d="M11.5 0V5H16.5z" fill="#c9c9c9"/><path d="M11.5 0.3V5H16.3" fill="none" stroke="#9a9a9a" stroke-width="0.6"/></svg>
<span class="t" style="left:467.2px;top:1563px;font-size:17.5px;color:#fff;transform:scaleX(0.9631);transform-origin:0 0;-webkit-text-stroke:0.25px #202020;">lessons.ls</span>
<span class="t" style="left:859.2px;top:1563px;font-size:17.5px;color:#dedede;transform:scaleX(1.0056);transform-origin:0 0;-webkit-text-stroke:0.25px #202020;">05.08.2002 19:37</span>
<span class="t" style="left:1128.8px;top:1563px;font-size:17.5px;color:#dedede;transform:scaleX(0.9694);transform-origin:0 0;-webkit-text-stroke:0.25px #202020;">LS-Datei</span>
<span class="t" style="left:1364.27px;top:1563px;font-size:17.5px;color:#dedede;transform:scaleX(0.9666);transform-origin:100% 0;-webkit-text-stroke:0.25px #202020;">36.573 KB</span>
<svg class="b" style="left:439.6px;top:1592.2px;" width="17" height="22" viewBox="0 0 17 22"><path d="M0.5 0H11.5L16.5 5V21.5H0.5z" fill="#f3f3f3"/><path d="M11.5 0V5H16.5z" fill="#c9c9c9"/><path d="M11.5 0.3V5H16.3" fill="none" stroke="#9a9a9a" stroke-width="0.6"/></svg>
<span class="t" style="left:467.2px;top:1595px;font-size:17.5px;color:#fff;transform:scaleX(1.0125);transform-origin:0 0;-webkit-text-stroke:0.25px #202020;">links.dat</span>
<span class="t" style="left:859.2px;top:1595px;font-size:17.5px;color:#dedede;transform:scaleX(1.0056);transform-origin:0 0;-webkit-text-stroke:0.25px #202020;">24.08.2002 22:59</span>
<span class="t" style="left:1128.8px;top:1595px;font-size:17.5px;color:#dedede;transform:scaleX(1.0325);transform-origin:0 0;-webkit-text-stroke:0.25px #202020;">DAT-Datei</span>
<span class="t" style="left:1388.60px;top:1595px;font-size:17.5px;color:#dedede;transform:scaleX(0.9581);transform-origin:100% 0;-webkit-text-stroke:0.25px #202020;">168 KB</span>
<svg class="b" style="left:439.6px;top:1624.2px;" width="17" height="22" viewBox="0 0 17 22"><path d="M0.5 0H11.5L16.5 5V21.5H0.5z" fill="#f3f3f3"/><path d="M11.5 0V5H16.5z" fill="#c9c9c9"/><path d="M11.5 0.3V5H16.3" fill="none" stroke="#9a9a9a" stroke-width="0.6"/></svg>
<span class="t" style="left:467.2px;top:1627px;font-size:17.5px;color:#fff;transform:scaleX(1.0281);transform-origin:0 0;-webkit-text-stroke:0.25px #202020;">links.pid</span>
<span class="t" style="left:859.2px;top:1627px;font-size:17.5px;color:#dedede;transform:scaleX(1.0056);transform-origin:0 0;-webkit-text-stroke:0.25px #202020;">16.07.2001 17:47</span>
<span class="t" style="left:1128.8px;top:1627px;font-size:17.5px;color:#dedede;transform:scaleX(1.0019);transform-origin:0 0;-webkit-text-stroke:0.25px #202020;">PID-Datei</span>
<span class="t" style="left:1408.06px;top:1627px;font-size:17.5px;color:#dedede;transform:scaleX(0.9225);transform-origin:100% 0;-webkit-text-stroke:0.25px #202020;">1 KB</span>
<svg class="b" style="left:437px;top:1655px;" width="24" height="24" viewBox="0 0 24 24"><rect width="24" height="24" fill="#06060a"/><rect x="0.4" y="0" width="22.6" height="0.7" fill="#8a8e8c"/><path d="M7 23.6C5.6 19 7.6 14.6 12 12.4C15 10.6 19.4 10 21 13.4C22.2 16.4 22 20.4 21.6 23.6z" fill="#5d726c"/><path d="M14 11.4C17 9.6 20.4 10.4 21.2 13.6C21.8 15.6 21.6 17.4 21 18.6C19 15.6 16.4 14.4 13 14.6z" fill="#c3cbca"/><path d="M7.4 12.4C9 11 12.6 11 14.6 11.6L13.6 14.6C11.4 14.2 9 14.6 7.2 15.4z" fill="#e6c9c2"/><ellipse cx="10.4" cy="8.2" rx="3.7" ry="3.6" fill="#d98b78"/><circle cx="12.4" cy="7.6" r="0.8" fill="#8a3a30"/><path d="M4.6 7.6C4.2 3.6 7.4 1.6 10.6 1.8C13.4 2 15.2 3.6 14.6 6.2C12.6 4.4 9.6 4.4 7.6 5.8C6.6 6.6 6.4 8.6 6.6 10.4C5.6 9.8 4.8 8.8 4.6 7.6z" fill="#474c38"/><ellipse cx="3.6" cy="6.6" rx="1.3" ry="2.4" fill="#d9d2bb"/><ellipse cx="5.2" cy="17.6" rx="3.3" ry="2.7" fill="#fbfbfb"/><path d="M4.6 20.4C7 20 9.6 20.6 10.6 23.4H5z" fill="#77755a"/><path d="M9 16C11 14.8 14 15.4 15.4 17" fill="none" stroke="#27383a" stroke-width="1.2"/></svg>
<span class="t" style="left:467.2px;top:1659px;font-size:17.5px;color:#fff;transform:scaleX(0.9525);transform-origin:0 0;-webkit-text-stroke:0.25px #202020;">LinksLauncher.exe</span>
<span class="t" style="left:859.2px;top:1659px;font-size:17.5px;color:#dedede;transform:scaleX(1.0056);transform-origin:0 0;-webkit-text-stroke:0.25px #202020;">08.05.2008 01:03</span>
<span class="t" style="left:1128.8px;top:1659px;font-size:17.5px;color:#dedede;transform:scaleX(1.0385);transform-origin:0 0;-webkit-text-stroke:0.25px #202020;">Anwendung</span>
<span class="t" style="left:1388.60px;top:1659px;font-size:17.5px;color:#dedede;transform:scaleX(0.9581);transform-origin:100% 0;-webkit-text-stroke:0.25px #202020;">448 KB</span>
<svg class="b" style="left:437px;top:1687px;" width="24" height="24" viewBox="0 0 24 24"><rect width="24" height="24" fill="#06060a"/><rect x="0.4" y="0" width="22.6" height="0.7" fill="#8a8e8c"/><path d="M7 23.6C5.6 19 7.6 14.6 12 12.4C15 10.6 19.4 10 21 13.4C22.2 16.4 22 20.4 21.6 23.6z" fill="#5d726c"/><path d="M14 11.4C17 9.6 20.4 10.4 21.2 13.6C21.8 15.6 21.6 17.4 21 18.6C19 15.6 16.4 14.4 13 14.6z" fill="#c3cbca"/><path d="M7.4 12.4C9 11 12.6 11 14.6 11.6L13.6 14.6C11.4 14.2 9 14.6 7.2 15.4z" fill="#e6c9c2"/><ellipse cx="10.4" cy="8.2" rx="3.7" ry="3.6" fill="#d98b78"/><circle cx="12.4" cy="7.6" r="0.8" fill="#8a3a30"/><path d="M4.6 7.6C4.2 3.6 7.4 1.6 10.6 1.8C13.4 2 15.2 3.6 14.6 6.2C12.6 4.4 9.6 4.4 7.6 5.8C6.6 6.6 6.4 8.6 6.6 10.4C5.6 9.8 4.8 8.8 4.6 7.6z" fill="#474c38"/><ellipse cx="3.6" cy="6.6" rx="1.3" ry="2.4" fill="#d9d2bb"/><ellipse cx="5.2" cy="17.6" rx="3.3" ry="2.7" fill="#fbfbfb"/><path d="M4.6 20.4C7 20 9.6 20.6 10.6 23.4H5z" fill="#77755a"/><path d="M9 16C11 14.8 14 15.4 15.4 17" fill="none" stroke="#27383a" stroke-width="1.2"/></svg>
<span class="t" style="left:467.2px;top:1691px;font-size:17.5px;color:#fff;transform:scaleX(0.9858);transform-origin:0 0;-webkit-text-stroke:0.25px #202020;">LinksMMIII.exe</span>
<span class="t" style="left:859.2px;top:1691px;font-size:17.5px;color:#dedede;transform:scaleX(1.0056);transform-origin:0 0;-webkit-text-stroke:0.25px #202020;">31.03.2010 02:49</span>
<span class="t" style="left:1128.8px;top:1691px;font-size:17.5px;color:#dedede;transform:scaleX(1.0385);transform-origin:0 0;-webkit-text-stroke:0.25px #202020;">Anwendung</span>
<span class="t" style="left:1374.00px;top:1691px;font-size:17.5px;color:#dedede;transform:scaleX(0.9583);transform-origin:100% 0;-webkit-text-stroke:0.25px #202020;">5.132 KB</span>
<svg class="b" style="left:437px;top:1719px;" width="24" height="24" viewBox="0 0 24 24"><rect width="24" height="24" fill="#06060a"/><rect x="0.4" y="0" width="22.6" height="0.7" fill="#8a8e8c"/><path d="M7 23.6C5.6 19 7.6 14.6 12 12.4C15 10.6 19.4 10 21 13.4C22.2 16.4 22 20.4 21.6 23.6z" fill="#5d726c"/><path d="M14 11.4C17 9.6 20.4 10.4 21.2 13.6C21.8 15.6 21.6 17.4 21 18.6C19 15.6 16.4 14.4 13 14.6z" fill="#c3cbca"/><path d="M7.4 12.4C9 11 12.6 11 14.6 11.6L13.6 14.6C11.4 14.2 9 14.6 7.2 15.4z" fill="#e6c9c2"/><ellipse cx="10.4" cy="8.2" rx="3.7" ry="3.6" fill="#d98b78"/><circle cx="12.4" cy="7.6" r="0.8" fill="#8a3a30"/><path d="M4.6 7.6C4.2 3.6 7.4 1.6 10.6 1.8C13.4 2 15.2 3.6 14.6 6.2C12.6 4.4 9.6 4.4 7.6 5.8C6.6 6.6 6.4 8.6 6.6 10.4C5.6 9.8 4.8 8.8 4.6 7.6z" fill="#474c38"/><ellipse cx="3.6" cy="6.6" rx="1.3" ry="2.4" fill="#d9d2bb"/><ellipse cx="5.2" cy="17.6" rx="3.3" ry="2.7" fill="#fbfbfb"/><path d="M4.6 20.4C7 20 9.6 20.6 10.6 23.4H5z" fill="#77755a"/><path d="M9 16C11 14.8 14 15.4 15.4 17" fill="none" stroke="#27383a" stroke-width="1.2"/></svg>
<span class="t" style="left:467.2px;top:1723px;font-size:17.5px;color:#fff;transform:scaleX(0.9365);transform-origin:0 0;-webkit-text-stroke:0.25px #202020;">LinksPD.exe</span>
<span class="t" style="left:859.2px;top:1723px;font-size:17.5px;color:#dedede;transform:scaleX(1.0056);transform-origin:0 0;-webkit-text-stroke:0.25px #202020;">07.05.2008 16:03</span>
<span class="t" style="left:1128.8px;top:1723px;font-size:17.5px;color:#dedede;transform:scaleX(1.0385);transform-origin:0 0;-webkit-text-stroke:0.25px #202020;">Anwendung</span>
<span class="t" style="left:1388.60px;top:1723px;font-size:17.5px;color:#dedede;transform:scaleX(0.9581);transform-origin:100% 0;-webkit-text-stroke:0.25px #202020;">636 KB</span>
<svg class="b" style="left:437px;top:1751px;" width="24" height="24" viewBox="0 0 24 24"><rect x="0" y="9" width="24" height="15" fill="#050505"/><path d="M0 24V19.5C5 16.5 12 16.2 18 19.5V24z" fill="#9a98a8"/><text x="12" y="9.2" font-family="Liberation Serif, serif" font-size="13" text-anchor="middle" fill="#e02a20" textLength="24" lengthAdjust="spacingAndGlyphs">Links</text><text x="15.3" y="17.3" font-family="Liberation Serif, serif" font-weight="bold" font-size="8.6" text-anchor="middle" fill="#f2ee58" textLength="16.5" lengthAdjust="spacingAndGlyphs">2001</text></svg>
<span class="t" style="left:467.2px;top:1755px;font-size:17.5px;color:#fff;transform:scaleX(0.9534);transform-origin:0 0;-webkit-text-stroke:0.25px #202020;">LNKS2001.ICO</span>
<span class="t" style="left:859.2px;top:1755px;font-size:17.5px;color:#dedede;transform:scaleX(1.0056);transform-origin:0 0;-webkit-text-stroke:0.25px #202020;">16.08.2000 23:24</span>
<span class="t" style="left:1128.8px;top:1755px;font-size:17.5px;color:#dedede;transform:scaleX(1.0454);transform-origin:0 0;-webkit-text-stroke:0.25px #202020;">Symbol</span>
<span class="t" style="left:1408.06px;top:1755px;font-size:17.5px;color:#dedede;transform:scaleX(0.9225);transform-origin:100% 0;-webkit-text-stroke:0.25px #202020;">3 KB</span>
<svg class="b" style="left:437px;top:1783px;" width="24" height="24" viewBox="0 0 24 24"><rect width="24" height="24" fill="#06060a"/><rect x="0.4" y="0" width="22.6" height="0.7" fill="#8a8e8c"/><path d="M7 23.6C5.6 19 7.6 14.6 12 12.4C15 10.6 19.4 10 21 13.4C22.2 16.4 22 20.4 21.6 23.6z" fill="#5d726c"/><path d="M14 11.4C17 9.6 20.4 10.4 21.2 13.6C21.8 15.6 21.6 17.4 21 18.6C19 15.6 16.4 14.4 13 14.6z" fill="#c3cbca"/><path d="M7.4 12.4C9 11 12.6 11 14.6 11.6L13.6 14.6C11.4 14.2 9 14.6 7.2 15.4z" fill="#e6c9c2"/><ellipse cx="10.4" cy="8.2" rx="3.7" ry="3.6" fill="#d98b78"/><circle cx="12.4" cy="7.6" r="0.8" fill="#8a3a30"/><path d="M4.6 7.6C4.2 3.6 7.4 1.6 10.6 1.8C13.4 2 15.2 3.6 14.6 6.2C12.6 4.4 9.6 4.4 7.6 5.8C6.6 6.6 6.4 8.6 6.6 10.4C5.6 9.8 4.8 8.8 4.6 7.6z" fill="#474c38"/><ellipse cx="3.6" cy="6.6" rx="1.3" ry="2.4" fill="#d9d2bb"/><ellipse cx="5.2" cy="17.6" rx="3.3" ry="2.7" fill="#fbfbfb"/><path d="M4.6 20.4C7 20 9.6 20.6 10.6 23.4H5z" fill="#77755a"/><path d="M9 16C11 14.8 14 15.4 15.4 17" fill="none" stroke="#27383a" stroke-width="1.2"/><text x="15.5" y="22.5" font-family="Liberation Serif, serif" font-weight="bold" font-size="8" text-anchor="middle" fill="#e6d43a" textLength="15" lengthAdjust="spacingAndGlyphs">2003</text></svg>
<span class="t" style="left:467.2px;top:1787px;font-size:17.5px;color:#fff;transform:scaleX(1.0074);transform-origin:0 0;-webkit-text-stroke:0.25px #202020;">lnks2003.ico</span>
<span class="t" style="left:859.2px;top:1787px;font-size:17.5px;color:#dedede;transform:scaleX(1.0056);transform-origin:0 0;-webkit-text-stroke:0.25px #202020;">17.07.2002 19:06</span>
<span class="t" style="left:1128.8px;top:1787px;font-size:17.5px;color:#dedede;transform:scaleX(1.0454);transform-origin:0 0;-webkit-text-stroke:0.25px #202020;">Symbol</span>
<span class="t" style="left:1408.06px;top:1787px;font-size:17.5px;color:#dedede;transform:scaleX(0.9225);transform-origin:100% 0;-webkit-text-stroke:0.25px #202020;">6 KB</span>
<div class="b" style="left:419px;top:848px;width:1053px;height:133px;box-sizing:border-box;border:3px solid #fff21c"></div>
<div class="b" style="left:422px;top:1006px;width:1052px;height:36.6px;box-sizing:border-box;border:3px solid #fff21c"></div>
<div class="b" style="left:1619px;top:1292px;width:4px;height:4px;background:#f6e41e;"></div>
</div></body></html>
